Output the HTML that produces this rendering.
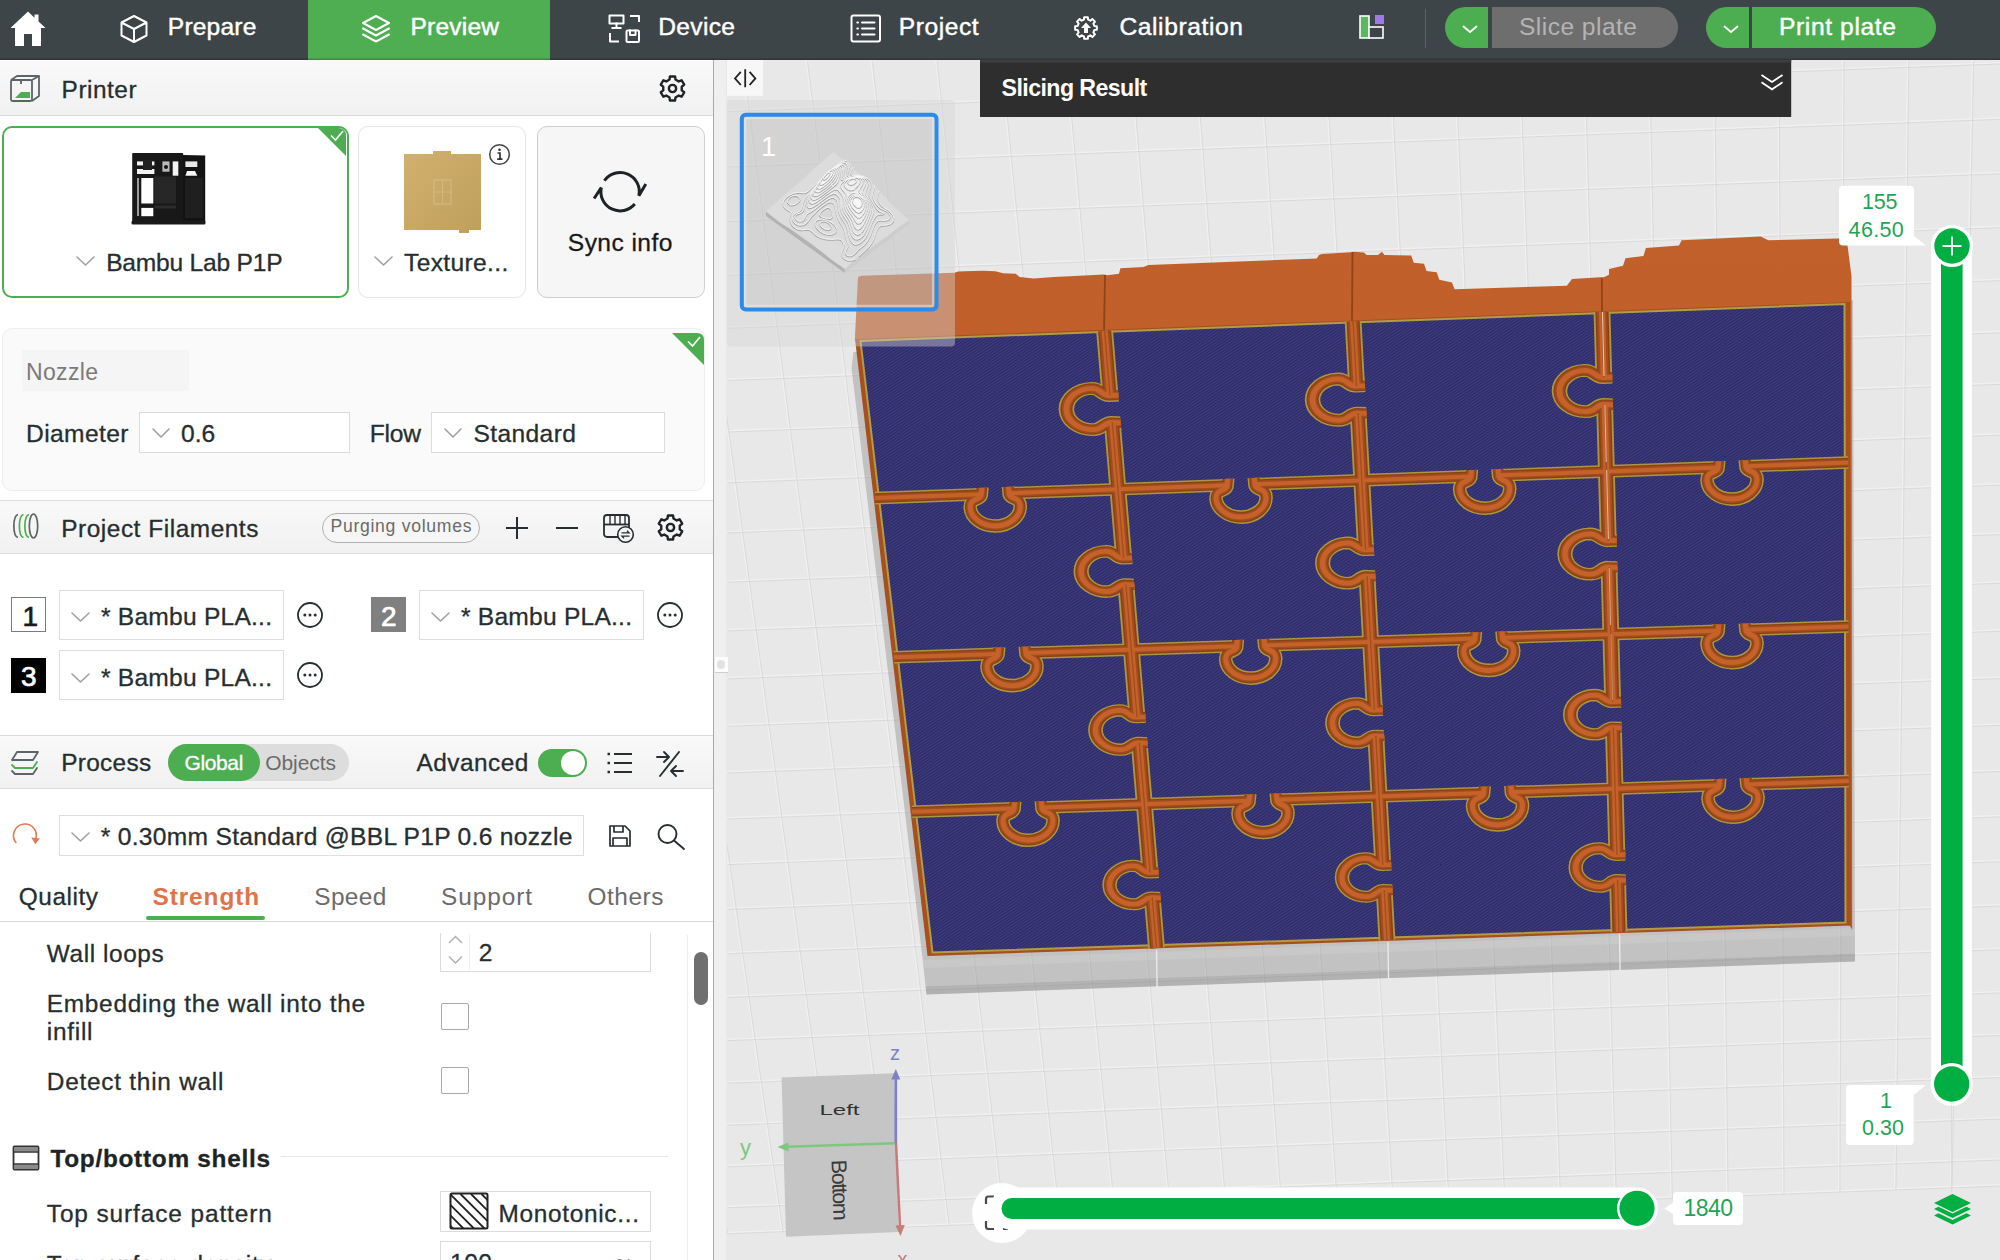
<!DOCTYPE html>
<html lang="en"><head><meta charset="utf-8"><title>Bambu Studio</title>
<style>
html,body{margin:0;padding:0;}
body{width:2000px;height:1260px;overflow:hidden;position:relative;background:#e8e8e8;font-family:"Liberation Sans",sans-serif;}
.t{position:absolute;white-space:pre;line-height:1;}
.ic{position:absolute;overflow:visible;}
svg text{font-family:"Liberation Sans",sans-serif;white-space:pre;}

#left{position:absolute;left:0;top:0;width:713px;height:1260px;background:#fff;overflow:hidden;}

.hdr{position:absolute;left:0;width:713px;background:linear-gradient(#f9f9f9,#f1f1f1);border-bottom:1px solid #dcdcdc;box-sizing:border-box;}
.bx{position:absolute;box-sizing:border-box;}
#vdiv{position:absolute;left:712.8px;top:60px;width:1.1px;height:1200px;background:#a9a9a9;}
#vgap{position:absolute;left:713.9px;top:60px;width:12.1px;height:1200px;background:#efefef;}

#topbar{position:absolute;left:0;top:0;width:2000px;height:60px;background:#3d4548;box-shadow:inset 0 -1.5px 0 rgba(0,0,0,0.22);}
#tab-preview{position:absolute;left:308px;top:0;width:241.5px;height:60px;background:#4fae52;box-shadow:inset 0 -1.5px 0 rgba(0,0,0,0.22);}
#tsep{position:absolute;left:1424.5px;top:9px;width:1.5px;height:39px;background:#5b6366;}
.btnl{position:absolute;top:7px;width:43px;height:41px;background:#4cae50;border-radius:20.5px 0 0 20.5px;}
.btnr{position:absolute;top:7px;height:41px;border-radius:0 20.5px 20.5px 0;}
#grip{position:absolute;left:714.5px;top:656.5px;width:13px;height:16px;background:#fcfcfc;border-bottom:1px solid #cfcfcf;box-sizing:border-box;}#grip i{position:absolute;left:2.2px;top:3.2px;width:8.6px;height:9px;border-radius:50%;background:#e2e2e2;}
</style></head>
<body>
<div id="left">
<div class="hdr" style="top:60px;height:56px;border-top:1.5px solid #fff"></div>
<svg class="ic" style="left:9px;top:74px" width="32" height="30" viewBox="0 0 32 30"><g fill="none" stroke="#5d6467" stroke-width="1.8" stroke-linejoin="round"><rect x="2" y="6" width="21" height="21" rx="1.5"/><path d="M2,6 L8,2 H30 V22 L23,27 M23,6 L30,2"/><path d="M12,6 V10"/></g><path d="M6,24 L12,18 H21 V24 Z" fill="#4cae50"/></svg>
<span class="t" style="left:61.6px;top:78.2px;font-size:24.4px;letter-spacing:0.52px;color:#262e30;font-weight:400;-webkit-text-stroke:0.3px #262e30;">Printer</span>
<svg class="ic" style="left:658.5px;top:75.3px" width="27" height="27" viewBox="0 0 27 27"><path d="M25.20,17.30 L22.64,21.73 L19.76,20.58 L16.50,22.46 L16.06,25.53 L10.94,25.53 L10.50,22.46 L7.24,20.58 L4.36,21.73 L1.80,17.30 L4.24,15.39 L4.24,11.61 L1.80,9.70 L4.36,5.27 L7.24,6.42 L10.50,4.54 L10.94,1.47 L16.06,1.47 L16.50,4.54 L19.76,6.42 L22.64,5.27 L25.20,9.70 L22.76,11.61 L22.76,15.39Z" fill="none" stroke="#1e2426" stroke-width="2.4" stroke-linejoin="round"/><circle cx="13.5" cy="13.5" r="3.65" fill="none" stroke="#1e2426" stroke-width="2.4"/></svg>
<div class="bx" style="left:1.5px;top:126px;width:347.0px;height:171.5px;border:2px solid #4cae50;border-radius:10px;background:#fff;overflow:hidden"></div>
<svg class="ic" style="left:316px;top:126px" width="32" height="32" viewBox="0 0 32 32"><path d="M2,2 H22 Q30,2 30,10 V30 Z" fill="#4cae50"/><path d="M15,9.5 L19.5,14 L27,5" fill="none" stroke="#fff" stroke-width="1.6"/></svg>
<svg class="ic" style="left:130px;top:151px" width="78" height="75" viewBox="0 0 78 75"><rect x="2.2" y="2" width="51" height="71" rx="1" fill="#181818"/><polygon points="53,4 75.2,4.5 75.2,71 53,73" fill="#131313"/><rect x="1.5" y="69.5" width="74" height="4" rx="1.5" fill="#1a1a1a"/><rect x="11.3" y="27" width="12" height="25.5" fill="#fdfdfd"/><rect x="11.3" y="56.9" width="12" height="8.3" fill="#fdfdfd"/><rect x="7" y="27" width="2" height="38" fill="#9a9a9a"/><rect x="7" y="10.4" width="17.4" height="4" fill="#f2f2f2"/><rect x="7" y="18" width="17.4" height="5" fill="#f2f2f2"/><rect x="13" y="9" width="9" height="10" fill="#222"/><rect x="32.4" y="10.4" width="7.1" height="10.3" fill="#b8b8b8"/><circle cx="36" cy="16" r="2" fill="#111"/><rect x="42.7" y="10.4" width="5.6" height="14.3" fill="#f4f4f4"/><rect x="55.4" y="10.4" width="11.9" height="5.6" fill="#e8e8e8"/><polygon points="55.4,24.7 57,20 65,20 67.3,24.7" fill="#f4f4f4"/><rect x="24.5" y="25.5" width="21.5" height="27" fill="#272727"/><rect x="24.5" y="54.5" width="21.5" height="3" fill="#2d2d2d"/><rect x="55" y="27" width="18" height="40" fill="#1f1f1f"/></svg>
<svg class="ic" style="left:76px;top:256px" width="19" height="10" viewBox="-1 -1 19 10"><path d="M0,0 L8.5,8 L17,0" fill="none" stroke="#a0a0a0" stroke-width="1.6" stroke-linecap="round" stroke-linejoin="round"/></svg>
<span class="t" style="left:106.2px;top:250.7px;font-size:24.6px;letter-spacing:-0.23px;color:#262e30;font-weight:400;-webkit-text-stroke:0.3px #262e30;">Bambu Lab P1P</span>
<div class="bx" style="left:358px;top:126px;width:168px;height:171.5px;border:1px solid #e6e6e6;border-radius:10px;background:#fff"></div>
<svg class="ic" style="left:403px;top:150px" width="79" height="84" viewBox="0 0 79 84"><defs><linearGradient id="gold" x1="0" y1="0" x2="1" y2="1"><stop offset="0" stop-color="#d2b16e"/><stop offset="1" stop-color="#bf9f5c"/></linearGradient></defs><path d="M1,4 H30 V1 H48 V4 H78 V80 H66 V83 H56 V80 H1 Z" fill="url(#gold)"/><rect x="31" y="30" width="17" height="24" fill="none" stroke="#d9c08a" stroke-width="0.8"/><path d="M31,42 H48 M39.500,30 V54" stroke="#d9c08a" stroke-width="0.6"/></svg>
<svg class="ic" style="left:487.500px;top:143px" width="23" height="23" viewBox="0 0 23 23"><circle cx="11.500" cy="11.500" r="9.800" fill="#fff" stroke="#444" stroke-width="1.5"/><path d="M9.500,10 H12 V16 M9.200,16.200 H14.500" stroke="#333" stroke-width="1.7" fill="none"/><circle cx="11.500" cy="6.800" r="1.300" fill="#333"/></svg>
<svg class="ic" style="left:374px;top:256px" width="19" height="10" viewBox="-1 -1 19 10"><path d="M0,0 L8.5,8 L17,0" fill="none" stroke="#a0a0a0" stroke-width="1.6" stroke-linecap="round" stroke-linejoin="round"/></svg>
<span class="t" style="left:404.0px;top:250.7px;font-size:24.6px;letter-spacing:0.35px;color:#262e30;font-weight:400;-webkit-text-stroke:0.3px #262e30;">Texture...</span>
<div class="bx" style="left:536.5px;top:126px;width:168.0px;height:171.5px;border:1.5px solid #cfcfcf;border-radius:10px;background:#f6f6f6"></div>
<svg class="ic" style="left:592px;top:166px" width="58" height="52" viewBox="0 0 58 52"><g fill="none" stroke="#1e2426" stroke-width="3" stroke-linejoin="miter"><path d="M12.4,14.7 A19.2,19.2 0 0 1 46.9,29.7 L53.8,17.9"/><path d="M42.8,38 A19.2,19.2 0 0 1 9.3,21.7 L2.1,32.5"/></g></svg>
<span class="t" style="left:567.8px;top:230.9px;font-size:24.6px;letter-spacing:0.43px;color:#1a1a1a;font-weight:400;-webkit-text-stroke:0.3px #1a1a1a;">Sync info</span>
<div class="bx" style="left:2px;top:328px;width:703px;height:162.5px;border:1px solid #eeeeee;border-radius:10px;background:#fafafa"></div>
<svg class="ic" style="left:671px;top:332px" width="34" height="34" viewBox="0 0 34 34"><path d="M1,1 H26 Q33,1 33,8 V33 Z" fill="#4cae50"/><path d="M17,9.500 L21.500,14 L29,5" fill="none" stroke="#fff" stroke-width="1.6"/></svg>
<div class="bx" style="left:21.5px;top:350px;width:167.5px;height:41px;background:#f5f5f5"></div>
<span class="t" style="left:26.0px;top:361.1px;font-size:23px;letter-spacing:0.34px;color:#7a7a7a;font-weight:400;">Nozzle</span>
<span class="t" style="left:26.0px;top:421.7px;font-size:24.6px;letter-spacing:0.39px;color:#262e30;font-weight:400;-webkit-text-stroke:0.3px #262e30;">Diameter</span>
<div class="bx" style="left:138.5px;top:411.5px;width:211.0px;height:41.0px;border:1px solid #dcdcdc;background:#fff"></div>
<svg class="ic" style="left:151.5px;top:427.5px" width="18" height="10" viewBox="-1 -1 18 10"><path d="M0,0 L8.0,8 L16,0" fill="none" stroke="#a0a0a0" stroke-width="1.6" stroke-linecap="round" stroke-linejoin="round"/></svg>
<span class="t" style="left:181.0px;top:421.7px;font-size:24.6px;letter-spacing:0.05px;color:#262e30;font-weight:400;-webkit-text-stroke:0.3px #262e30;">0.6</span>
<span class="t" style="left:369.7px;top:421.7px;font-size:24.6px;letter-spacing:-0.17px;color:#262e30;font-weight:400;-webkit-text-stroke:0.3px #262e30;">Flow</span>
<div class="bx" style="left:431px;top:411.5px;width:234px;height:41.0px;border:1px solid #dcdcdc;background:#fff"></div>
<svg class="ic" style="left:443.5px;top:427.5px" width="18" height="10" viewBox="-1 -1 18 10"><path d="M0,0 L8.0,8 L16,0" fill="none" stroke="#a0a0a0" stroke-width="1.6" stroke-linecap="round" stroke-linejoin="round"/></svg>
<span class="t" style="left:473.4px;top:421.7px;font-size:24.6px;letter-spacing:0.39px;color:#262e30;font-weight:400;-webkit-text-stroke:0.3px #262e30;">Standard</span>
<div class="hdr" style="top:499.5px;height:54.500px;border-top:1px solid #dcdcdc"></div>
<svg class="ic" style="left:11px;top:512px" width="30" height="28" viewBox="0 0 30 28"><g fill="none" stroke-width="1.7"><path d="M7,2.500 C1.500,4 1.500,24 7,25.500" stroke="#5d6467"/><path d="M12.500,2.500 C7,4 7,24 12.500,25.500" stroke="#4cae50"/><path d="M18,2.500 C12.500,4 12.500,24 18,25.500" stroke="#4cae50"/><ellipse cx="22.500" cy="14" rx="4.200" ry="12" stroke="#5d6467"/></g></svg>
<span class="t" style="left:61.2px;top:517.0px;font-size:24.4px;letter-spacing:0.55px;color:#262e30;font-weight:400;-webkit-text-stroke:0.3px #262e30;">Project Filaments</span>
<div class="bx" style="left:322px;top:512.5px;width:158px;height:30.0px;border:1.8px solid #b0b0b0;border-radius:15px;background:#f6f6f6"></div>
<span class="t" style="left:330.5px;top:517.5px;font-size:17.6px;letter-spacing:0.71px;color:#6b6b6b;font-weight:400;">Purging volumes</span>
<svg class="ic" style="left:504px;top:515px" width="26" height="26" viewBox="0 0 26 26"><path d="M13,2 V24 M2,13 H24" stroke="#262e30" stroke-width="2"/></svg>
<svg class="ic" style="left:555px;top:526px" width="24" height="4" viewBox="0 0 24 4"><path d="M1,2 H23" stroke="#262e30" stroke-width="2"/></svg>
<svg class="ic" style="left:602px;top:512px" width="33" height="32" viewBox="0 0 33 32"><g fill="none" stroke="#262e30" stroke-width="1.8" stroke-linejoin="round"><rect x="2" y="3" width="25" height="22" rx="3"/><path d="M2,12.500 H27"/><path d="M8,3.500 V12 M13,3.500 V12 M18,3.500 V12 M23,3.500 V12" stroke-width="1.400"/></g><circle cx="23.500" cy="22.500" r="7.800" fill="#f4f4f4" stroke="#262e30" stroke-width="1.600"/><path d="M19.500,20.800 H27 L25,18.800 M27.500,24.200 H20 L22,26.200" fill="none" stroke="#262e30" stroke-width="1.300"/></svg>
<svg class="ic" style="left:656.5px;top:513.5px" width="27" height="27" viewBox="0 0 27 27"><path d="M25.20,17.30 L22.64,21.73 L19.76,20.58 L16.50,22.46 L16.06,25.53 L10.94,25.53 L10.50,22.46 L7.24,20.58 L4.36,21.73 L1.80,17.30 L4.24,15.39 L4.24,11.61 L1.80,9.70 L4.36,5.27 L7.24,6.42 L10.50,4.54 L10.94,1.47 L16.06,1.47 L16.50,4.54 L19.76,6.42 L22.64,5.27 L25.20,9.70 L22.76,11.61 L22.76,15.39Z" fill="none" stroke="#1e2426" stroke-width="2.4" stroke-linejoin="round"/><circle cx="13.5" cy="13.5" r="3.65" fill="none" stroke="#1e2426" stroke-width="2.4"/></svg>
<div class="bx" style="left:11px;top:597.0px;width:35px;height:35.0px;background:#fff;border:1.5px solid #7a7a7a"></div>
<span class="t" style="left:22.4px;top:602.9px;font-size:28px;letter-spacing:-6.57px;color:#1a1a1a;font-weight:400;-webkit-text-stroke:0.7px #1a1a1a;">1</span>
<div class="bx" style="left:58.5px;top:589.5px;width:225.0px;height:50.0px;border:1px solid #dedede;background:#fff"></div>
<svg class="ic" style="left:71.0px;top:612.0px" width="19" height="10" viewBox="-1 -1 19 10"><path d="M0,0 L8.5,8 L17,0" fill="none" stroke="#a0a0a0" stroke-width="1.6" stroke-linecap="round" stroke-linejoin="round"/></svg>
<span class="t" style="left:101.0px;top:605.1px;font-size:24.6px;letter-spacing:0.22px;color:#262e30;font-weight:400;-webkit-text-stroke:0.3px #262e30;">* Bambu PLA...</span>
<svg class="ic" style="left:295.8px;top:600.5px" width="28" height="28" viewBox="0 0 28 28"><circle cx="14" cy="14" r="12" fill="none" stroke="#262e30" stroke-width="1.800"/><circle cx="8.800" cy="14" r="1.500" fill="#262e30"/><circle cx="14" cy="14" r="1.500" fill="#262e30"/><circle cx="19.200" cy="14" r="1.500" fill="#262e30"/></svg>
<div class="bx" style="left:371px;top:597.0px;width:35px;height:35.0px;background:#808080;border:none"></div>
<span class="t" style="left:381.0px;top:602.9px;font-size:28px;letter-spacing:-1.07px;color:#fff;font-weight:400;-webkit-text-stroke:0.7px #fff;">2</span>
<div class="bx" style="left:418.5px;top:589.5px;width:225.0px;height:50.0px;border:1px solid #dedede;background:#fff"></div>
<svg class="ic" style="left:431.0px;top:612.0px" width="19" height="10" viewBox="-1 -1 19 10"><path d="M0,0 L8.5,8 L17,0" fill="none" stroke="#a0a0a0" stroke-width="1.6" stroke-linecap="round" stroke-linejoin="round"/></svg>
<span class="t" style="left:461.0px;top:605.1px;font-size:24.6px;letter-spacing:0.22px;color:#262e30;font-weight:400;-webkit-text-stroke:0.3px #262e30;">* Bambu PLA...</span>
<svg class="ic" style="left:655.7px;top:600.5px" width="28" height="28" viewBox="0 0 28 28"><circle cx="14" cy="14" r="12" fill="none" stroke="#262e30" stroke-width="1.800"/><circle cx="8.800" cy="14" r="1.500" fill="#262e30"/><circle cx="14" cy="14" r="1.500" fill="#262e30"/><circle cx="19.200" cy="14" r="1.500" fill="#262e30"/></svg>
<div class="bx" style="left:11px;top:657.5px;width:35px;height:35.0px;background:#000;border:none"></div>
<span class="t" style="left:21.0px;top:663.4px;font-size:28px;letter-spacing:-0.87px;color:#fff;font-weight:400;-webkit-text-stroke:0.7px #fff;">3</span>
<div class="bx" style="left:58.5px;top:650px;width:225.0px;height:50px;border:1px solid #dedede;background:#fff"></div>
<svg class="ic" style="left:71.0px;top:672.5px" width="19" height="10" viewBox="-1 -1 19 10"><path d="M0,0 L8.5,8 L17,0" fill="none" stroke="#a0a0a0" stroke-width="1.6" stroke-linecap="round" stroke-linejoin="round"/></svg>
<span class="t" style="left:101.0px;top:665.6px;font-size:24.6px;letter-spacing:0.22px;color:#262e30;font-weight:400;-webkit-text-stroke:0.3px #262e30;">* Bambu PLA...</span>
<svg class="ic" style="left:295.8px;top:661px" width="28" height="28" viewBox="0 0 28 28"><circle cx="14" cy="14" r="12" fill="none" stroke="#262e30" stroke-width="1.800"/><circle cx="8.800" cy="14" r="1.500" fill="#262e30"/><circle cx="14" cy="14" r="1.500" fill="#262e30"/><circle cx="19.200" cy="14" r="1.500" fill="#262e30"/></svg>
<div class="hdr" style="top:734.500px;height:54.500px;border-top:1px solid #dcdcdc"></div>
<svg class="ic" style="left:9px;top:749px" width="32" height="28" viewBox="0 0 32 28"><g fill="none" stroke-width="1.800" stroke-linejoin="round" stroke-linecap="round"><path d="M8,3 H29 L24,11 H3 Z" stroke="#5d6467"/><path d="M3,16 L6,19 H24 L28,13" stroke="#4cae50"/><path d="M3,22 L6,25 H24 L28,19" stroke="#5d6467"/></g></svg>
<span class="t" style="left:61.2px;top:751.0px;font-size:24.4px;letter-spacing:0.31px;color:#262e30;font-weight:400;-webkit-text-stroke:0.3px #262e30;">Process</span>
<div class="bx" style="left:167.5px;top:744px;width:181.0px;height:37px;background:#dddddd;border-radius:18.500px"></div>
<div class="bx" style="left:167.5px;top:744px;width:92.5px;height:37px;background:#4cae50;border-radius:18.500px"></div>
<span class="t" style="left:184.5px;top:752.4px;font-size:21px;letter-spacing:-0.38px;color:#fff;font-weight:400;-webkit-text-stroke:0.300px #fff;">Global</span>
<span class="t" style="left:265.3px;top:752.4px;font-size:21px;letter-spacing:-0.10px;color:#6b6b6b;font-weight:400;">Objects</span>
<span class="t" style="left:416.5px;top:751.0px;font-size:24.4px;letter-spacing:0.48px;color:#262e30;font-weight:400;-webkit-text-stroke:0.3px #262e30;">Advanced</span>
<div class="bx" style="left:538.2px;top:748.5px;width:48.59999999999991px;height:28.5px;background:#4cae50;border-radius:14.500px"></div>
<div class="bx" style="left:561px;top:750.5px;width:24px;height:24.0px;background:#fff;border-radius:12px"></div>
<svg class="ic" style="left:606px;top:751px" width="28" height="24" viewBox="0 0 28 24"><path d="M8,3 H26 M8,12 H26 M8,21 H26" stroke="#262e30" stroke-width="2"/><path d="M1.500,3 H4 M1.500,12 H4 M1.500,21 H4" stroke="#262e30" stroke-width="2.400"/></svg>
<svg class="ic" style="left:655px;top:749px" width="30" height="30" viewBox="0 0 30 30"><g fill="none" stroke="#262e30" stroke-width="1.900" stroke-linecap="round" stroke-linejoin="round"><path d="M24,3 L5,27"/><path d="M2,8 H13 M9,3 L14,8 L9,13"/><path d="M28,22 H17 M21,17 L16,22 L21,27"/></g></svg>
<svg class="ic" style="left:11px;top:822px" width="32" height="28" viewBox="0 0 32 28"><path d="M5.3,20.9 A11.4,11.4 0 1 1 24.7,17.2" fill="none" stroke="#e07b53" stroke-width="1.6"/><path d="M24.3,22.3 L20.3,15.6 L28.9,16.4 Z" fill="#e07b53"/></svg>
<div class="bx" style="left:58.5px;top:814.5px;width:525.0px;height:41.0px;border:1px solid #dedede;background:#fff"></div>
<svg class="ic" style="left:71px;top:832px" width="19" height="10" viewBox="-1 -1 19 10"><path d="M0,0 L8.5,8 L17,0" fill="none" stroke="#a0a0a0" stroke-width="1.6" stroke-linecap="round" stroke-linejoin="round"/></svg>
<span class="t" style="left:100.8px;top:824.7px;font-size:24.6px;letter-spacing:0.29px;color:#262e30;font-weight:400;-webkit-text-stroke:0.3px #262e30;">* 0.30mm Standard @BBL P1P 0.6 nozzle</span>
<svg class="ic" style="left:608px;top:824px" width="24" height="24" viewBox="0 0 24 24"><g fill="none" stroke="#262e30" stroke-width="1.700" stroke-linejoin="round"><path d="M2,2 H17 L22,7 V22 H2 Z"/><path d="M6,2 V8 H15 V2"/><path d="M5,22 V14 H19 V22"/></g></svg>
<svg class="ic" style="left:656px;top:823px" width="30" height="28" viewBox="0 0 30 28"><circle cx="11.500" cy="11" r="9" fill="none" stroke="#262e30" stroke-width="1.900"/><path d="M18,17.500 L28,26" stroke="#262e30" stroke-width="1.900" stroke-linecap="round"/></svg>
<span class="t" style="left:18.8px;top:884.9px;font-size:24.4px;letter-spacing:0.53px;color:#262e30;font-weight:400;-webkit-text-stroke:0.3px #262e30;">Quality</span>
<span class="t" style="left:152.5px;top:884.9px;font-size:24.4px;letter-spacing:0.91px;color:#e0734a;font-weight:700;">Strength</span>
<span class="t" style="left:314.3px;top:884.9px;font-size:24.4px;letter-spacing:0.36px;color:#6b6b6b;font-weight:400;">Speed</span>
<span class="t" style="left:441.0px;top:884.9px;font-size:24.4px;letter-spacing:0.92px;color:#6b6b6b;font-weight:400;">Support</span>
<span class="t" style="left:587.5px;top:884.9px;font-size:24.4px;letter-spacing:0.54px;color:#6b6b6b;font-weight:400;">Others</span>
<div class="bx" style="left:146px;top:916px;width:118.5px;height:4px;background:#4cae50;border-radius:2px"></div>
<div class="bx" style="left:0px;top:921px;width:713px;height:1.2000000000000455px;background:#d9d9d9"></div>
<span class="t" style="left:46.8px;top:942.1px;font-size:24.4px;letter-spacing:0.59px;color:#262e30;font-weight:400;-webkit-text-stroke:0.3px #262e30;">Wall loops</span>
<div class="bx" style="left:440px;top:933px;width:211px;height:38.5px;border:1px solid #dcdcdc;border-top:none;background:#fff"></div>
<div class="bx" style="left:469px;top:934px;width:1px;height:36px;background:#f0f0f0"></div>
<svg class="ic" style="left:447px;top:934px" width="18" height="36" viewBox="0 0 18 36"><path d="M2,9 L8.500,2.500 L15,9 M2,22.500 L8.500,29 L15,22.500" fill="none" stroke="#b0b0b0" stroke-width="1.500"/></svg>
<span class="t" style="left:478.8px;top:940.6px;font-size:24.6px;letter-spacing:0.00px;color:#262e30;font-weight:400;-webkit-text-stroke:0.3px #262e30;">2</span>
<div class="bx" style="left:687px;top:935px;width:1px;height:325px;background:#ececec"></div>
<div class="bx" style="left:694px;top:952px;width:13.5px;height:53px;background:#6f6f6f;border-radius:7px"></div>
<span class="t" style="left:46.8px;top:991.8px;font-size:24.4px;letter-spacing:0.72px;color:#262e30;font-weight:400;-webkit-text-stroke:0.3px #262e30;">Embedding the wall into the</span>
<span class="t" style="left:46.8px;top:1019.9px;font-size:24.4px;letter-spacing:0.73px;color:#262e30;font-weight:400;-webkit-text-stroke:0.3px #262e30;">infill</span>
<div class="bx" style="left:440.5px;top:1002.5px;width:28.0px;height:27.0px;border:1.600px solid #a8a8a8;border-radius:2px;background:#fff"></div>
<span class="t" style="left:46.8px;top:1070.2px;font-size:24.4px;letter-spacing:0.75px;color:#262e30;font-weight:400;-webkit-text-stroke:0.3px #262e30;">Detect thin wall</span>
<div class="bx" style="left:440.5px;top:1066.5px;width:28.0px;height:27.0px;border:1.600px solid #a8a8a8;border-radius:2px;background:#fff"></div>
<svg class="ic" style="left:11.500px;top:1145px" width="28" height="26" viewBox="0 0 28 26"><rect x="1.500" y="1.500" width="25" height="23" rx="1" fill="#fff" stroke="#333" stroke-width="1.800"/><rect x="2" y="2" width="24" height="4.500" fill="#8a8a8a"/><rect x="2" y="19.500" width="24" height="4.500" fill="#8a8a8a"/><path d="M1.500,7 H26.500 M1.500,19 H26.500" stroke="#333" stroke-width="1.300"/></svg>
<span class="t" style="left:50.4px;top:1147.2px;font-size:24.4px;letter-spacing:0.71px;color:#1d2426;font-weight:700;-webkit-text-stroke:0.3px #1d2426;">Top/bottom shells</span>
<div class="bx" style="left:281px;top:1156.3px;width:387px;height:1.2000000000000455px;background:#e6e6e6"></div>
<span class="t" style="left:46.8px;top:1202.4px;font-size:24.4px;letter-spacing:0.90px;color:#262e30;font-weight:400;-webkit-text-stroke:0.3px #262e30;">Top surface pattern</span>
<div class="bx" style="left:440px;top:1190.5px;width:211px;height:41.0px;border:1px solid #dcdcdc;background:#fff"></div>
<svg class="ic" style="left:449px;top:1191.500px" width="40" height="38" viewBox="0 0 40 38"><defs><clipPath id="hc"><rect x="2" y="2" width="36" height="34"/></clipPath></defs><rect x="1.500" y="1.500" width="37" height="35" rx="1.500" fill="#fff" stroke="#222" stroke-width="2"/><g clip-path="url(#hc)" stroke="#222" stroke-width="1.900"><path d="M-9.500,2 L30.500,42 M1,2 L41,42 M11.500,2 L51.500,42 M22,2 L62,42 M32.500,2 L72.500,42 M-20,2 L20,42 M-30.500,2 L9.500,42"/></g></svg>
<span class="t" style="left:498.6px;top:1202.4px;font-size:24.4px;letter-spacing:0.68px;color:#262e30;font-weight:400;-webkit-text-stroke:0.3px #262e30;">Monotonic...</span>
<span class="t" style="left:46.8px;top:1252.7px;font-size:24.4px;letter-spacing:0.82px;color:#262e30;font-weight:400;-webkit-text-stroke:0.3px #262e30;">Top surface density</span>
<div class="bx" style="left:440px;top:1240.5px;width:211px;height:41.0px;border:1px solid #dcdcdc;background:#fff"></div>
<span class="t" style="left:450.0px;top:1250.6px;font-size:24.6px;letter-spacing:0.48px;color:#262e30;font-weight:400;-webkit-text-stroke:0.3px #262e30;">100</span>
<span class="t" style="left:615.6px;top:1256.0px;font-size:20px;letter-spacing:0.00px;color:#8a8a8a;font-weight:400;">%</span>
</div>
<div id="vdiv"></div><div id="vgap"></div>
<svg id="scene" width="1273" height="1200" viewBox="727 60 1273 1200" style="position:absolute;left:727px;top:60px">
<defs>
<pattern id="hatch" width="2.5" height="2.5" patternUnits="userSpaceOnUse" patternTransform="rotate(-33)">
<rect width="2.5" height="2.5" fill="#403d7d"/><rect y="0" width="2.5" height="1.2" fill="#2c2969"/></pattern>
<linearGradient id="og" x1="0" y1="0" x2="0" y2="1"><stop offset="0" stop-color="#c2602c"/><stop offset="1" stop-color="#bd5c2a"/></linearGradient>
<linearGradient id="gg" x1="0" y1="0" x2="0" y2="1"><stop offset="0" stop-color="#c9c9c9"/><stop offset="0.7" stop-color="#c0c0c0"/><stop offset="1" stop-color="#b4b4b4"/></linearGradient>
<clipPath id="cv"><rect x="727" y="60" width="1273" height="1200"/></clipPath>
</defs>
<rect x="727" y="60" width="1273" height="1200" fill="#e8e8e8"/>
<g clip-path="url(#cv)">
<g stroke="#f0f0f0" stroke-width="1.6"><line x1="-100.6" y1="60.0" x2="175.2" y2="1253.2"/><line x1="-35.8" y1="60.0" x2="230.1" y2="1251.1"/><line x1="29.0" y1="60.0" x2="285.2" y2="1249.1"/><line x1="93.7" y1="60.0" x2="340.2" y2="1247.0"/><line x1="158.5" y1="60.0" x2="395.3" y2="1244.9"/><line x1="223.3" y1="60.0" x2="450.4" y2="1242.9"/><line x1="288.1" y1="60.0" x2="505.5" y2="1240.8"/><line x1="352.9" y1="60.0" x2="560.7" y2="1238.7"/><line x1="417.6" y1="60.0" x2="615.9" y2="1236.7"/><line x1="482.4" y1="60.0" x2="671.2" y2="1234.6"/><line x1="547.2" y1="60.0" x2="726.4" y2="1232.5"/><line x1="612.0" y1="60.0" x2="781.8" y2="1230.4"/><line x1="676.8" y1="60.0" x2="837.1" y2="1228.4"/><line x1="741.5" y1="60.0" x2="892.5" y2="1226.3"/><line x1="806.3" y1="60.0" x2="947.9" y2="1224.2"/><line x1="871.1" y1="60.0" x2="1003.3" y2="1222.1"/><line x1="935.9" y1="60.0" x2="1058.8" y2="1220.1"/><line x1="1000.7" y1="60.0" x2="1114.3" y2="1218.0"/><line x1="1065.4" y1="60.0" x2="1169.8" y2="1215.9"/><line x1="1130.2" y1="60.0" x2="1225.4" y2="1213.8"/><line x1="1195.0" y1="60.0" x2="1281.0" y2="1211.7"/><line x1="1259.8" y1="60.0" x2="1336.6" y2="1209.6"/><line x1="1324.6" y1="60.0" x2="1392.3" y2="1207.6"/><line x1="1389.3" y1="60.0" x2="1448.0" y2="1205.5"/><line x1="1454.1" y1="60.0" x2="1503.7" y2="1203.4"/><line x1="1518.9" y1="60.0" x2="1559.4" y2="1201.3"/><line x1="1583.7" y1="60.0" x2="1615.2" y2="1199.2"/><line x1="1648.5" y1="60.0" x2="1671.1" y2="1197.1"/><line x1="1713.3" y1="60.0" x2="1726.9" y2="1195.0"/><line x1="1778.0" y1="60.0" x2="1782.8" y2="1192.9"/><line x1="1842.8" y1="60.0" x2="1838.7" y2="1190.8"/><line x1="1907.6" y1="60.0" x2="1894.7" y2="1188.7"/><line x1="1972.4" y1="60.0" x2="1950.7" y2="1186.6"/><line x1="2037.2" y1="60.0" x2="2006.7" y2="1184.5"/><line x1="727.0" y1="54.3" x2="2000.0" y2="6.5"/><line x1="727.0" y1="110.4" x2="2000.0" y2="62.7"/><line x1="727.0" y1="165.8" x2="2000.0" y2="118.1"/><line x1="727.0" y1="220.4" x2="2000.0" y2="172.6"/><line x1="727.0" y1="274.1" x2="2000.0" y2="226.4"/><line x1="727.0" y1="327.1" x2="2000.0" y2="279.4"/><line x1="727.0" y1="379.3" x2="2000.0" y2="331.6"/><line x1="727.0" y1="430.8" x2="2000.0" y2="383.1"/><line x1="727.0" y1="481.6" x2="2000.0" y2="433.9"/><line x1="727.0" y1="531.7" x2="2000.0" y2="483.9"/><line x1="727.0" y1="581.0" x2="2000.0" y2="533.3"/><line x1="727.0" y1="629.7" x2="2000.0" y2="582.0"/><line x1="727.0" y1="677.7" x2="2000.0" y2="630.0"/><line x1="727.0" y1="725.1" x2="2000.0" y2="677.3"/><line x1="727.0" y1="771.8" x2="2000.0" y2="724.1"/><line x1="727.0" y1="817.9" x2="2000.0" y2="770.2"/><line x1="727.0" y1="863.4" x2="2000.0" y2="815.6"/><line x1="727.0" y1="908.3" x2="2000.0" y2="860.5"/><line x1="727.0" y1="952.5" x2="2000.0" y2="904.8"/><line x1="727.0" y1="996.3" x2="2000.0" y2="948.5"/><line x1="727.0" y1="1039.4" x2="2000.0" y2="991.7"/><line x1="727.0" y1="1082.0" x2="2000.0" y2="1034.2"/><line x1="727.0" y1="1124.0" x2="2000.0" y2="1076.3"/><line x1="727.0" y1="1165.5" x2="2000.0" y2="1117.8"/><line x1="727.0" y1="1206.5" x2="2000.0" y2="1158.8"/><line x1="727.0" y1="1232.5" x2="2000.0" y2="1184.8"/></g>
<g stroke="#d6d6d6" stroke-width="0.8"><line x1="-99.4" y1="61.2" x2="176.4" y2="1254.4"/><line x1="-34.6" y1="61.2" x2="231.3" y2="1252.3"/><line x1="30.2" y1="61.2" x2="286.4" y2="1250.3"/><line x1="94.9" y1="61.2" x2="341.4" y2="1248.2"/><line x1="159.7" y1="61.2" x2="396.5" y2="1246.1"/><line x1="224.5" y1="61.2" x2="451.6" y2="1244.1"/><line x1="289.3" y1="61.2" x2="506.7" y2="1242.0"/><line x1="354.1" y1="61.2" x2="561.9" y2="1239.9"/><line x1="418.8" y1="61.2" x2="617.1" y2="1237.9"/><line x1="483.6" y1="61.2" x2="672.4" y2="1235.8"/><line x1="548.4" y1="61.2" x2="727.6" y2="1233.7"/><line x1="613.2" y1="61.2" x2="783.0" y2="1231.6"/><line x1="678.0" y1="61.2" x2="838.3" y2="1229.6"/><line x1="742.7" y1="61.2" x2="893.7" y2="1227.5"/><line x1="807.5" y1="61.2" x2="949.1" y2="1225.4"/><line x1="872.3" y1="61.2" x2="1004.5" y2="1223.3"/><line x1="937.1" y1="61.2" x2="1060.0" y2="1221.3"/><line x1="1001.9" y1="61.2" x2="1115.5" y2="1219.2"/><line x1="1066.6" y1="61.2" x2="1171.0" y2="1217.1"/><line x1="1131.4" y1="61.2" x2="1226.6" y2="1215.0"/><line x1="1196.2" y1="61.2" x2="1282.2" y2="1212.9"/><line x1="1261.0" y1="61.2" x2="1337.8" y2="1210.8"/><line x1="1325.8" y1="61.2" x2="1393.5" y2="1208.8"/><line x1="1390.5" y1="61.2" x2="1449.2" y2="1206.7"/><line x1="1455.3" y1="61.2" x2="1504.9" y2="1204.6"/><line x1="1520.1" y1="61.2" x2="1560.6" y2="1202.5"/><line x1="1584.9" y1="61.2" x2="1616.4" y2="1200.4"/><line x1="1649.7" y1="61.2" x2="1672.3" y2="1198.3"/><line x1="1714.5" y1="61.2" x2="1728.1" y2="1196.2"/><line x1="1779.2" y1="61.2" x2="1784.0" y2="1194.1"/><line x1="1844.0" y1="61.2" x2="1839.9" y2="1192.0"/><line x1="1908.8" y1="61.2" x2="1895.9" y2="1189.9"/><line x1="1973.6" y1="61.2" x2="1951.9" y2="1187.8"/><line x1="2038.4" y1="61.2" x2="2007.9" y2="1185.7"/><line x1="728.2" y1="55.5" x2="2001.2" y2="7.7"/><line x1="728.2" y1="111.6" x2="2001.2" y2="63.9"/><line x1="728.2" y1="167.0" x2="2001.2" y2="119.3"/><line x1="728.2" y1="221.6" x2="2001.2" y2="173.8"/><line x1="728.2" y1="275.3" x2="2001.2" y2="227.6"/><line x1="728.2" y1="328.3" x2="2001.2" y2="280.6"/><line x1="728.2" y1="380.5" x2="2001.2" y2="332.8"/><line x1="728.2" y1="432.0" x2="2001.2" y2="384.3"/><line x1="728.2" y1="482.8" x2="2001.2" y2="435.1"/><line x1="728.2" y1="532.9" x2="2001.2" y2="485.1"/><line x1="728.2" y1="582.2" x2="2001.2" y2="534.5"/><line x1="728.2" y1="630.9" x2="2001.2" y2="583.2"/><line x1="728.2" y1="678.9" x2="2001.2" y2="631.2"/><line x1="728.2" y1="726.3" x2="2001.2" y2="678.5"/><line x1="728.2" y1="773.0" x2="2001.2" y2="725.3"/><line x1="728.2" y1="819.1" x2="2001.2" y2="771.4"/><line x1="728.2" y1="864.6" x2="2001.2" y2="816.8"/><line x1="728.2" y1="909.5" x2="2001.2" y2="861.7"/><line x1="728.2" y1="953.7" x2="2001.2" y2="906.0"/><line x1="728.2" y1="997.5" x2="2001.2" y2="949.7"/><line x1="728.2" y1="1040.6" x2="2001.2" y2="992.9"/><line x1="728.2" y1="1083.2" x2="2001.2" y2="1035.4"/><line x1="728.2" y1="1125.2" x2="2001.2" y2="1077.5"/><line x1="728.2" y1="1166.7" x2="2001.2" y2="1119.0"/><line x1="728.2" y1="1207.7" x2="2001.2" y2="1160.0"/><line x1="728.2" y1="1233.7" x2="2001.2" y2="1186.0"/></g>
</g>
<polygon points="851.5,368.0 853.5,352.0 1853.0,300.0 1855.0,961.5 926.5,994.5 922.5,958.0" fill="rgba(140,140,140,0.42)"/>
<polygon points="925.3,986.5 1855.0,953.5 1855.0,961.5 926.5,994.5" fill="rgba(120,120,120,0.22)"/>
<polygon points="922.8,960.0 1855.0,928.0 1855.0,936.0 923.6,968.0" fill="rgba(255,255,255,0.10)"/>
<line x1="1156.5" y1="950" x2="1157.1" y2="987.5" stroke="#ececec" stroke-width="1.3"/>
<line x1="1388" y1="942" x2="1388.6" y2="979.5" stroke="#ececec" stroke-width="1.3"/>
<line x1="1619.5" y1="934" x2="1620.1" y2="971.5" stroke="#ececec" stroke-width="1.3"/>
<polygon points="854.8,340.0 858.0,277.0 861.5,275.8 954.6,272.8 958.0,271.6 964.8,271.2 982.7,270.7 995.4,271.2 1003.0,273.3 1015.8,273.8 1019.6,277.1 1033.7,278.4 1054.0,277.1 1079.6,275.8 1103.8,274.5 1107.7,275.3 1119.0,273.8 1120.4,268.2 1143.4,266.9 1148.5,265.1 1232.7,261.8 1316.8,258.5 1319.0,255.0 1321.9,254.1 1351.0,252.3 1353.8,251.8 1364.0,252.6 1366.6,255.1 1378.0,255.1 1381.9,251.8 1384.4,255.1 1411.2,255.6 1413.8,262.8 1424.0,263.8 1426.5,270.9 1436.7,272.2 1439.3,279.8 1452.0,282.4 1454.6,289.3 1566.8,285.7 1572.0,279.1 1600.0,277.3 1603.8,277.3 1609.0,274.7 1609.0,268.9 1623.0,265.8 1625.5,258.2 1643.4,256.1 1645.9,248.0 1679.0,245.4 1681.6,240.3 1760.7,236.5 1768.4,240.3 1846.2,238.3 1847.6,246.0 1851.5,276.0 1852.2,930.0 1850.0,926.0" fill="url(#og)"/>
<line x1="1105" y1="275" x2="1104" y2="331" stroke="#8f431b" stroke-width="1.8"/>
<line x1="1352.5" y1="252" x2="1352" y2="321" stroke="#8f431b" stroke-width="1.8"/>
<line x1="1601.8" y1="278" x2="1602" y2="311" stroke="#8f431b" stroke-width="1.8"/>
<polygon points="855.0,339.0 1850.0,302.0 1851.0,925.5 927.5,956.0" fill="#a64f1f"/>
<polygon points="860.5,341.0 1844.5,304.0 1845.5,922.5 932.5,952.5" fill="url(#hatch)" stroke="#b39c44" stroke-width="2"/>
<defs><clipPath id="rc0"><polygon points="950.2,489.1 1040.2,485.8 1040.2,553.7 950.2,553.7"/></clipPath><clipPath id="rc1"><polygon points="1196.0,480.1 1286.0,476.8 1286.0,544.8 1196.0,544.8"/></clipPath><clipPath id="rc2"><polygon points="1439.7,471.2 1529.7,467.9 1529.7,535.9 1439.7,535.9"/></clipPath><clipPath id="rc3"><polygon points="1687.0,462.2 1777.0,458.9 1777.0,526.8 1687.0,526.8"/></clipPath><clipPath id="rc4"><polygon points="967.0,648.6 1057.0,645.7 1057.0,713.4 967.0,713.4"/></clipPath><clipPath id="rc5"><polygon points="1205.7,640.9 1295.7,638.0 1295.7,705.8 1205.7,705.8"/></clipPath><clipPath id="rc6"><polygon points="1443.7,633.3 1533.7,630.4 1533.7,698.1 1443.7,698.1"/></clipPath><clipPath id="rc7"><polygon points="1687.0,625.5 1777.0,622.6 1777.0,690.3 1687.0,690.3"/></clipPath><clipPath id="rc8"><polygon points="983.0,803.1 1073.0,800.2 1073.0,867.9 983.0,867.9"/></clipPath><clipPath id="rc9"><polygon points="1218.0,795.4 1308.0,792.5 1308.0,860.2 1218.0,860.2"/></clipPath><clipPath id="rc10"><polygon points="1452.5,787.7 1542.5,784.8 1542.5,852.6 1452.5,852.6"/></clipPath><clipPath id="rc11"><polygon points="1688.0,780.0 1778.0,777.1 1778.0,844.9 1688.0,844.9"/></clipPath><clipPath id="rc12"><polygon points="1116.2,369.0 1122.9,449.0 1031.1,449.0 1031.1,369.0"/></clipPath><clipPath id="rc13"><polygon points="1129.8,531.4 1136.5,611.4 1044.8,611.4 1044.8,531.4"/></clipPath><clipPath id="rc14"><polygon points="1143.1,690.0 1149.9,770.0 1058.1,770.0 1058.1,690.0"/></clipPath><clipPath id="rc15"><polygon points="1156.2,845.0 1162.9,925.0 1071.1,925.0 1071.1,845.0"/></clipPath><clipPath id="rc16"><polygon points="1363.6,359.6 1367.9,439.6 1277.3,439.6 1277.3,359.6"/></clipPath><clipPath id="rc17"><polygon points="1372.5,523.0 1376.9,603.0 1286.3,603.0 1286.3,523.0"/></clipPath><clipPath id="rc18"><polygon points="1381.3,683.0 1385.6,763.0 1295.1,763.0 1295.1,683.0"/></clipPath><clipPath id="rc19"><polygon points="1389.7,837.5 1394.1,917.5 1303.5,917.5 1303.5,837.5"/></clipPath><clipPath id="rc20"><polygon points="1611.5,351.0 1613.7,431.0 1524.2,431.0 1524.2,351.0"/></clipPath><clipPath id="rc21"><polygon points="1616.0,514.0 1618.1,594.0 1528.6,594.0 1528.6,514.0"/></clipPath><clipPath id="rc22"><polygon points="1620.3,674.7 1622.5,754.7 1533.0,754.7 1533.0,674.7"/></clipPath><clipPath id="rc23"><polygon points="1624.5,827.5 1626.7,907.5 1537.2,907.5 1537.2,827.5"/></clipPath></defs>
<path d="M875.0,498.1 L980.7,494.3 M1009.7,493.2 L1226.5,485.3 M1255.5,484.2 L1470.2,476.4 M1499.2,475.3 L1717.5,467.4 M1746.5,466.3 L1848.3,462.5" fill="none" stroke="#ad963c" stroke-width="12.6"/>
<path d="M894.0,657.2 L997.5,653.9 M1026.5,653.0 L1236.2,646.2 M1265.2,645.3 L1474.2,638.6 M1503.2,637.7 L1717.5,630.8 M1746.5,629.8 L1848.6,626.5" fill="none" stroke="#ad963c" stroke-width="12.6"/>
<path d="M912.0,811.7 L1013.5,808.4 M1042.5,807.5 L1248.5,800.7 M1277.5,799.8 L1483.0,793.0 M1512.0,792.1 L1718.5,785.3 M1747.5,784.4 L1848.8,781.0" fill="none" stroke="#ad963c" stroke-width="12.6"/>
<path d="M1104.6,331.0 L1110.0,395.5 M1112.3,422.5 L1123.7,558.2 M1125.9,584.6 L1137.0,717.1 M1139.2,742.9 L1150.1,872.5 M1152.2,897.5 L1156.5,948.0" fill="none" stroke="#ad963c" stroke-width="16.8"/>
<path d="M1353.1,321.3 L1356.6,386.1 M1358.1,413.1 L1365.6,549.8 M1367.0,576.2 L1374.4,710.1 M1375.8,735.9 L1382.8,865.0 M1384.2,890.0 L1387.0,940.0" fill="none" stroke="#ad963c" stroke-width="16.8"/>
<path d="M1602.0,311.8 L1603.8,377.5 M1604.6,404.5 L1608.3,540.8 M1609.0,567.2 L1612.7,701.8 M1613.4,727.6 L1616.9,855.0 M1617.6,880.0 L1619.0,932.0" fill="none" stroke="#ad963c" stroke-width="16.8"/>
<g clip-path="url(#rc0)"><path d="M982.2,484.3 L981.2,495.3 C979.7,500.3 970.2,497.9 970.2,506.9 A25.0,19.5 0 0 0 1020.2,506.1 C1020.2,497.1 1010.7,499.2 1009.2,494.2 L1008.2,483.2" fill="none" stroke="#ad963c" stroke-width="13.6" stroke-linejoin="round"/></g>
<g clip-path="url(#rc1)"><path d="M1228.0,475.3 L1227.0,486.3 C1225.5,491.3 1216.0,489.0 1216.0,498.0 A25.0,19.5 0 0 0 1266.0,497.2 C1266.0,488.2 1256.5,490.2 1255.0,485.2 L1254.0,474.2" fill="none" stroke="#ad963c" stroke-width="13.6" stroke-linejoin="round"/></g>
<g clip-path="url(#rc2)"><path d="M1471.7,466.4 L1470.7,477.4 C1469.2,482.4 1459.7,480.1 1459.7,489.1 A25.0,19.5 0 0 0 1509.7,488.3 C1509.7,479.3 1500.2,481.3 1498.7,476.3 L1497.7,465.3" fill="none" stroke="#ad963c" stroke-width="13.6" stroke-linejoin="round"/></g>
<g clip-path="url(#rc3)"><path d="M1719.0,457.4 L1718.0,468.4 C1716.5,473.4 1707.0,471.0 1707.0,480.0 A25.0,19.5 0 0 0 1757.0,479.2 C1757.0,470.2 1747.5,472.3 1746.0,467.3 L1745.0,456.3" fill="none" stroke="#ad963c" stroke-width="13.6" stroke-linejoin="round"/></g>
<g clip-path="url(#rc4)"><path d="M999.0,643.9 L998.0,654.9 C996.5,659.9 987.0,657.6 987.0,666.6 A25.0,19.5 0 0 0 1037.0,665.8 C1037.0,656.8 1027.5,659.0 1026.0,654.0 L1025.0,643.0" fill="none" stroke="#ad963c" stroke-width="13.6" stroke-linejoin="round"/></g>
<g clip-path="url(#rc5)"><path d="M1237.7,636.2 L1236.7,647.2 C1235.2,652.2 1225.7,650.0 1225.7,659.0 A25.0,19.5 0 0 0 1275.7,658.2 C1275.7,649.2 1266.2,651.3 1264.7,646.3 L1263.7,635.3" fill="none" stroke="#ad963c" stroke-width="13.6" stroke-linejoin="round"/></g>
<g clip-path="url(#rc6)"><path d="M1475.7,628.6 L1474.7,639.6 C1473.2,644.6 1463.7,642.3 1463.7,651.3 A25.0,19.5 0 0 0 1513.7,650.5 C1513.7,641.5 1504.2,643.7 1502.7,638.7 L1501.7,627.7" fill="none" stroke="#ad963c" stroke-width="13.6" stroke-linejoin="round"/></g>
<g clip-path="url(#rc7)"><path d="M1719.0,620.8 L1718.0,631.8 C1716.5,636.8 1707.0,634.5 1707.0,643.5 A25.0,19.5 0 0 0 1757.0,642.7 C1757.0,633.7 1747.5,635.8 1746.0,630.8 L1745.0,619.8" fill="none" stroke="#ad963c" stroke-width="13.6" stroke-linejoin="round"/></g>
<g clip-path="url(#rc8)"><path d="M1015.0,798.4 L1014.0,809.4 C1012.5,814.4 1003.0,812.1 1003.0,821.1 A25.0,19.5 0 0 0 1053.0,820.3 C1053.0,811.3 1043.5,813.5 1042.0,808.5 L1041.0,797.5" fill="none" stroke="#ad963c" stroke-width="13.6" stroke-linejoin="round"/></g>
<g clip-path="url(#rc9)"><path d="M1250.0,790.7 L1249.0,801.7 C1247.5,806.7 1238.0,804.4 1238.0,813.4 A25.0,19.5 0 0 0 1288.0,812.6 C1288.0,803.6 1278.5,805.8 1277.0,800.8 L1276.0,789.8" fill="none" stroke="#ad963c" stroke-width="13.6" stroke-linejoin="round"/></g>
<g clip-path="url(#rc10)"><path d="M1484.5,783.0 L1483.5,794.0 C1482.0,799.0 1472.5,796.8 1472.5,805.8 A25.0,19.5 0 0 0 1522.5,805.0 C1522.5,796.0 1513.0,798.1 1511.5,793.1 L1510.5,782.1" fill="none" stroke="#ad963c" stroke-width="13.6" stroke-linejoin="round"/></g>
<g clip-path="url(#rc11)"><path d="M1720.0,775.3 L1719.0,786.3 C1717.5,791.3 1708.0,789.1 1708.0,798.1 A25.0,19.5 0 0 0 1758.0,797.3 C1758.0,788.3 1748.5,790.4 1747.0,785.4 L1746.0,774.4" fill="none" stroke="#ad963c" stroke-width="13.6" stroke-linejoin="round"/></g>
<g clip-path="url(#rc12)"><path d="M9.06,-13.98 L-1.78,-13.48 C-7.61,-13.48 -8.55,-20.65 -16.05,-20.65 A21.85,20.65 0 0 0 -14.80,20.65 C-7.30,20.65 -5.72,13.48 0.11,13.48 L10.94,13.98" transform="translate(1111.1,409.0) scale(1.2,1)" fill="none" stroke="#ad963c" stroke-width="12.9" stroke-linejoin="round"/></g>
<g clip-path="url(#rc13)"><path d="M9.08,-13.67 L-1.76,-13.17 C-7.59,-13.17 -8.18,-20.17 -15.68,-20.17 A21.34,20.17 0 0 0 -14.43,20.17 C-6.93,20.17 -5.74,13.17 0.09,13.17 L10.92,13.67" transform="translate(1124.8,571.4) scale(1.2,1)" fill="none" stroke="#ad963c" stroke-width="12.6" stroke-linejoin="round"/></g>
<g clip-path="url(#rc14)"><path d="M9.10,-13.35 L-1.73,-12.85 C-7.57,-12.85 -7.80,-19.69 -15.30,-19.69 A20.83,19.69 0 0 0 -14.05,19.69 C-6.55,19.69 -5.77,12.85 0.07,12.85 L10.90,13.35" transform="translate(1138.1,730.0) scale(1.2,1)" fill="none" stroke="#ad963c" stroke-width="12.3" stroke-linejoin="round"/></g>
<g clip-path="url(#rc15)"><path d="M9.12,-13.04 L-1.71,-12.54 C-7.54,-12.54 -7.43,-19.20 -14.93,-19.20 A20.31,19.20 0 0 0 -13.68,19.20 C-6.18,19.20 -5.79,12.54 0.04,12.54 L10.88,13.04" transform="translate(1151.1,885.0) scale(1.2,1)" fill="none" stroke="#ad963c" stroke-width="12.0" stroke-linejoin="round"/></g>
<g clip-path="url(#rc16)"><path d="M9.38,-13.98 L-1.45,-13.48 C-7.28,-13.48 -8.55,-20.65 -16.05,-20.65 A21.85,20.65 0 0 0 -14.80,20.65 C-7.30,20.65 -6.05,13.48 -0.22,13.48 L10.62,13.98" transform="translate(1357.3,399.6) scale(1.2,1)" fill="none" stroke="#ad963c" stroke-width="12.9" stroke-linejoin="round"/></g>
<g clip-path="url(#rc17)"><path d="M9.40,-13.67 L-1.43,-13.17 C-7.27,-13.17 -8.18,-20.17 -15.68,-20.17 A21.34,20.17 0 0 0 -14.43,20.17 C-6.93,20.17 -6.07,13.17 -0.23,13.17 L10.60,13.67" transform="translate(1366.3,563.0) scale(1.2,1)" fill="none" stroke="#ad963c" stroke-width="12.6" stroke-linejoin="round"/></g>
<g clip-path="url(#rc18)"><path d="M9.41,-13.35 L-1.42,-12.85 C-7.25,-12.85 -7.80,-19.69 -15.30,-19.69 A20.83,19.69 0 0 0 -14.05,19.69 C-6.55,19.69 -6.08,12.85 -0.25,12.85 L10.59,13.35" transform="translate(1375.1,723.0) scale(1.2,1)" fill="none" stroke="#ad963c" stroke-width="12.3" stroke-linejoin="round"/></g>
<g clip-path="url(#rc19)"><path d="M9.43,-13.04 L-1.41,-12.54 C-7.24,-12.54 -7.43,-19.20 -14.93,-19.20 A20.31,19.20 0 0 0 -13.68,19.20 C-6.18,19.20 -6.09,12.54 -0.26,12.54 L10.57,13.04" transform="translate(1383.5,877.5) scale(1.2,1)" fill="none" stroke="#ad963c" stroke-width="12.0" stroke-linejoin="round"/></g>
<g clip-path="url(#rc20)"><path d="M9.69,-13.98 L-1.14,-13.48 C-6.97,-13.48 -8.55,-20.65 -16.05,-20.65 A21.85,20.65 0 0 0 -14.80,20.65 C-7.30,20.65 -6.36,13.48 -0.53,13.48 L10.31,13.98" transform="translate(1604.2,391.0) scale(1.2,1)" fill="none" stroke="#ad963c" stroke-width="12.9" stroke-linejoin="round"/></g>
<g clip-path="url(#rc21)"><path d="M9.70,-13.67 L-1.13,-13.17 C-6.97,-13.17 -8.18,-20.17 -15.68,-20.17 A21.34,20.17 0 0 0 -14.43,20.17 C-6.93,20.17 -6.37,13.17 -0.53,13.17 L10.30,13.67" transform="translate(1608.6,554.0) scale(1.2,1)" fill="none" stroke="#ad963c" stroke-width="12.6" stroke-linejoin="round"/></g>
<g clip-path="url(#rc22)"><path d="M9.71,-13.35 L-1.13,-12.85 C-6.96,-12.85 -7.80,-19.69 -15.30,-19.69 A20.83,19.69 0 0 0 -14.05,19.69 C-6.55,19.69 -6.37,12.85 -0.54,12.85 L10.29,13.35" transform="translate(1613.0,714.7) scale(1.2,1)" fill="none" stroke="#ad963c" stroke-width="12.3" stroke-linejoin="round"/></g>
<g clip-path="url(#rc23)"><path d="M9.71,-13.04 L-1.12,-12.54 C-6.95,-12.54 -7.43,-19.20 -14.93,-19.20 A20.31,19.20 0 0 0 -13.68,19.20 C-6.18,19.20 -6.38,12.54 -0.55,12.54 L10.29,13.04" transform="translate(1617.2,867.5) scale(1.2,1)" fill="none" stroke="#ad963c" stroke-width="12.0" stroke-linejoin="round"/></g>
<path d="M875.0,498.1 L980.7,494.3 M1009.7,493.2 L1226.5,485.3 M1255.5,484.2 L1470.2,476.4 M1499.2,475.3 L1717.5,467.4 M1746.5,466.3 L1848.3,462.5" fill="none" stroke="#8a3f17" stroke-width="9.6"/>
<path d="M894.0,657.2 L997.5,653.9 M1026.5,653.0 L1236.2,646.2 M1265.2,645.3 L1474.2,638.6 M1503.2,637.7 L1717.5,630.8 M1746.5,629.8 L1848.6,626.5" fill="none" stroke="#8a3f17" stroke-width="9.6"/>
<path d="M912.0,811.7 L1013.5,808.4 M1042.5,807.5 L1248.5,800.7 M1277.5,799.8 L1483.0,793.0 M1512.0,792.1 L1718.5,785.3 M1747.5,784.4 L1848.8,781.0" fill="none" stroke="#8a3f17" stroke-width="9.6"/>
<path d="M1104.6,331.0 L1110.0,395.5 M1112.3,422.5 L1123.7,558.2 M1125.9,584.6 L1137.0,717.1 M1139.2,742.9 L1150.1,872.5 M1152.2,897.5 L1156.5,948.0" fill="none" stroke="#8a3f17" stroke-width="13.1"/>
<path d="M1353.1,321.3 L1356.6,386.1 M1358.1,413.1 L1365.6,549.8 M1367.0,576.2 L1374.4,710.1 M1375.8,735.9 L1382.8,865.0 M1384.2,890.0 L1387.0,940.0" fill="none" stroke="#8a3f17" stroke-width="13.1"/>
<path d="M1602.0,311.8 L1603.8,377.5 M1604.6,404.5 L1608.3,540.8 M1609.0,567.2 L1612.7,701.8 M1613.4,727.6 L1616.9,855.0 M1617.6,880.0 L1619.0,932.0" fill="none" stroke="#8a3f17" stroke-width="13.1"/>
<g clip-path="url(#rc0)"><path d="M982.2,484.3 L981.2,495.3 C979.7,500.3 970.2,497.9 970.2,506.9 A25.0,19.5 0 0 0 1020.2,506.1 C1020.2,497.1 1010.7,499.2 1009.2,494.2 L1008.2,483.2" fill="none" stroke="#8a3f17" stroke-width="10.6" stroke-linejoin="round"/></g>
<g clip-path="url(#rc1)"><path d="M1228.0,475.3 L1227.0,486.3 C1225.5,491.3 1216.0,489.0 1216.0,498.0 A25.0,19.5 0 0 0 1266.0,497.2 C1266.0,488.2 1256.5,490.2 1255.0,485.2 L1254.0,474.2" fill="none" stroke="#8a3f17" stroke-width="10.6" stroke-linejoin="round"/></g>
<g clip-path="url(#rc2)"><path d="M1471.7,466.4 L1470.7,477.4 C1469.2,482.4 1459.7,480.1 1459.7,489.1 A25.0,19.5 0 0 0 1509.7,488.3 C1509.7,479.3 1500.2,481.3 1498.7,476.3 L1497.7,465.3" fill="none" stroke="#8a3f17" stroke-width="10.6" stroke-linejoin="round"/></g>
<g clip-path="url(#rc3)"><path d="M1719.0,457.4 L1718.0,468.4 C1716.5,473.4 1707.0,471.0 1707.0,480.0 A25.0,19.5 0 0 0 1757.0,479.2 C1757.0,470.2 1747.5,472.3 1746.0,467.3 L1745.0,456.3" fill="none" stroke="#8a3f17" stroke-width="10.6" stroke-linejoin="round"/></g>
<g clip-path="url(#rc4)"><path d="M999.0,643.9 L998.0,654.9 C996.5,659.9 987.0,657.6 987.0,666.6 A25.0,19.5 0 0 0 1037.0,665.8 C1037.0,656.8 1027.5,659.0 1026.0,654.0 L1025.0,643.0" fill="none" stroke="#8a3f17" stroke-width="10.6" stroke-linejoin="round"/></g>
<g clip-path="url(#rc5)"><path d="M1237.7,636.2 L1236.7,647.2 C1235.2,652.2 1225.7,650.0 1225.7,659.0 A25.0,19.5 0 0 0 1275.7,658.2 C1275.7,649.2 1266.2,651.3 1264.7,646.3 L1263.7,635.3" fill="none" stroke="#8a3f17" stroke-width="10.6" stroke-linejoin="round"/></g>
<g clip-path="url(#rc6)"><path d="M1475.7,628.6 L1474.7,639.6 C1473.2,644.6 1463.7,642.3 1463.7,651.3 A25.0,19.5 0 0 0 1513.7,650.5 C1513.7,641.5 1504.2,643.7 1502.7,638.7 L1501.7,627.7" fill="none" stroke="#8a3f17" stroke-width="10.6" stroke-linejoin="round"/></g>
<g clip-path="url(#rc7)"><path d="M1719.0,620.8 L1718.0,631.8 C1716.5,636.8 1707.0,634.5 1707.0,643.5 A25.0,19.5 0 0 0 1757.0,642.7 C1757.0,633.7 1747.5,635.8 1746.0,630.8 L1745.0,619.8" fill="none" stroke="#8a3f17" stroke-width="10.6" stroke-linejoin="round"/></g>
<g clip-path="url(#rc8)"><path d="M1015.0,798.4 L1014.0,809.4 C1012.5,814.4 1003.0,812.1 1003.0,821.1 A25.0,19.5 0 0 0 1053.0,820.3 C1053.0,811.3 1043.5,813.5 1042.0,808.5 L1041.0,797.5" fill="none" stroke="#8a3f17" stroke-width="10.6" stroke-linejoin="round"/></g>
<g clip-path="url(#rc9)"><path d="M1250.0,790.7 L1249.0,801.7 C1247.5,806.7 1238.0,804.4 1238.0,813.4 A25.0,19.5 0 0 0 1288.0,812.6 C1288.0,803.6 1278.5,805.8 1277.0,800.8 L1276.0,789.8" fill="none" stroke="#8a3f17" stroke-width="10.6" stroke-linejoin="round"/></g>
<g clip-path="url(#rc10)"><path d="M1484.5,783.0 L1483.5,794.0 C1482.0,799.0 1472.5,796.8 1472.5,805.8 A25.0,19.5 0 0 0 1522.5,805.0 C1522.5,796.0 1513.0,798.1 1511.5,793.1 L1510.5,782.1" fill="none" stroke="#8a3f17" stroke-width="10.6" stroke-linejoin="round"/></g>
<g clip-path="url(#rc11)"><path d="M1720.0,775.3 L1719.0,786.3 C1717.5,791.3 1708.0,789.1 1708.0,798.1 A25.0,19.5 0 0 0 1758.0,797.3 C1758.0,788.3 1748.5,790.4 1747.0,785.4 L1746.0,774.4" fill="none" stroke="#8a3f17" stroke-width="10.6" stroke-linejoin="round"/></g>
<g clip-path="url(#rc12)"><path d="M9.06,-13.98 L-1.78,-13.48 C-7.61,-13.48 -8.55,-20.65 -16.05,-20.65 A21.85,20.65 0 0 0 -14.80,20.65 C-7.30,20.65 -5.72,13.48 0.11,13.48 L10.94,13.98" transform="translate(1111.1,409.0) scale(1.2,1)" fill="none" stroke="#8a3f17" stroke-width="10.1" stroke-linejoin="round"/></g>
<g clip-path="url(#rc13)"><path d="M9.08,-13.67 L-1.76,-13.17 C-7.59,-13.17 -8.18,-20.17 -15.68,-20.17 A21.34,20.17 0 0 0 -14.43,20.17 C-6.93,20.17 -5.74,13.17 0.09,13.17 L10.92,13.67" transform="translate(1124.8,571.4) scale(1.2,1)" fill="none" stroke="#8a3f17" stroke-width="9.9" stroke-linejoin="round"/></g>
<g clip-path="url(#rc14)"><path d="M9.10,-13.35 L-1.73,-12.85 C-7.57,-12.85 -7.80,-19.69 -15.30,-19.69 A20.83,19.69 0 0 0 -14.05,19.69 C-6.55,19.69 -5.77,12.85 0.07,12.85 L10.90,13.35" transform="translate(1138.1,730.0) scale(1.2,1)" fill="none" stroke="#8a3f17" stroke-width="9.6" stroke-linejoin="round"/></g>
<g clip-path="url(#rc15)"><path d="M9.12,-13.04 L-1.71,-12.54 C-7.54,-12.54 -7.43,-19.20 -14.93,-19.20 A20.31,19.20 0 0 0 -13.68,19.20 C-6.18,19.20 -5.79,12.54 0.04,12.54 L10.88,13.04" transform="translate(1151.1,885.0) scale(1.2,1)" fill="none" stroke="#8a3f17" stroke-width="9.4" stroke-linejoin="round"/></g>
<g clip-path="url(#rc16)"><path d="M9.38,-13.98 L-1.45,-13.48 C-7.28,-13.48 -8.55,-20.65 -16.05,-20.65 A21.85,20.65 0 0 0 -14.80,20.65 C-7.30,20.65 -6.05,13.48 -0.22,13.48 L10.62,13.98" transform="translate(1357.3,399.6) scale(1.2,1)" fill="none" stroke="#8a3f17" stroke-width="10.1" stroke-linejoin="round"/></g>
<g clip-path="url(#rc17)"><path d="M9.40,-13.67 L-1.43,-13.17 C-7.27,-13.17 -8.18,-20.17 -15.68,-20.17 A21.34,20.17 0 0 0 -14.43,20.17 C-6.93,20.17 -6.07,13.17 -0.23,13.17 L10.60,13.67" transform="translate(1366.3,563.0) scale(1.2,1)" fill="none" stroke="#8a3f17" stroke-width="9.9" stroke-linejoin="round"/></g>
<g clip-path="url(#rc18)"><path d="M9.41,-13.35 L-1.42,-12.85 C-7.25,-12.85 -7.80,-19.69 -15.30,-19.69 A20.83,19.69 0 0 0 -14.05,19.69 C-6.55,19.69 -6.08,12.85 -0.25,12.85 L10.59,13.35" transform="translate(1375.1,723.0) scale(1.2,1)" fill="none" stroke="#8a3f17" stroke-width="9.6" stroke-linejoin="round"/></g>
<g clip-path="url(#rc19)"><path d="M9.43,-13.04 L-1.41,-12.54 C-7.24,-12.54 -7.43,-19.20 -14.93,-19.20 A20.31,19.20 0 0 0 -13.68,19.20 C-6.18,19.20 -6.09,12.54 -0.26,12.54 L10.57,13.04" transform="translate(1383.5,877.5) scale(1.2,1)" fill="none" stroke="#8a3f17" stroke-width="9.4" stroke-linejoin="round"/></g>
<g clip-path="url(#rc20)"><path d="M9.69,-13.98 L-1.14,-13.48 C-6.97,-13.48 -8.55,-20.65 -16.05,-20.65 A21.85,20.65 0 0 0 -14.80,20.65 C-7.30,20.65 -6.36,13.48 -0.53,13.48 L10.31,13.98" transform="translate(1604.2,391.0) scale(1.2,1)" fill="none" stroke="#8a3f17" stroke-width="10.1" stroke-linejoin="round"/></g>
<g clip-path="url(#rc21)"><path d="M9.70,-13.67 L-1.13,-13.17 C-6.97,-13.17 -8.18,-20.17 -15.68,-20.17 A21.34,20.17 0 0 0 -14.43,20.17 C-6.93,20.17 -6.37,13.17 -0.53,13.17 L10.30,13.67" transform="translate(1608.6,554.0) scale(1.2,1)" fill="none" stroke="#8a3f17" stroke-width="9.9" stroke-linejoin="round"/></g>
<g clip-path="url(#rc22)"><path d="M9.71,-13.35 L-1.13,-12.85 C-6.96,-12.85 -7.80,-19.69 -15.30,-19.69 A20.83,19.69 0 0 0 -14.05,19.69 C-6.55,19.69 -6.37,12.85 -0.54,12.85 L10.29,13.35" transform="translate(1613.0,714.7) scale(1.2,1)" fill="none" stroke="#8a3f17" stroke-width="9.6" stroke-linejoin="round"/></g>
<g clip-path="url(#rc23)"><path d="M9.71,-13.04 L-1.12,-12.54 C-6.95,-12.54 -7.43,-19.20 -14.93,-19.20 A20.31,19.20 0 0 0 -13.68,19.20 C-6.18,19.20 -6.38,12.54 -0.55,12.54 L10.29,13.04" transform="translate(1617.2,867.5) scale(1.2,1)" fill="none" stroke="#8a3f17" stroke-width="9.4" stroke-linejoin="round"/></g>
<path d="M875.0,498.1 L980.7,494.3 M1009.7,493.2 L1226.5,485.3 M1255.5,484.2 L1470.2,476.4 M1499.2,475.3 L1717.5,467.4 M1746.5,466.3 L1848.3,462.5" fill="none" stroke="#a04c1e" stroke-width="7.2"/>
<path d="M894.0,657.2 L997.5,653.9 M1026.5,653.0 L1236.2,646.2 M1265.2,645.3 L1474.2,638.6 M1503.2,637.7 L1717.5,630.8 M1746.5,629.8 L1848.6,626.5" fill="none" stroke="#a04c1e" stroke-width="7.2"/>
<path d="M912.0,811.7 L1013.5,808.4 M1042.5,807.5 L1248.5,800.7 M1277.5,799.8 L1483.0,793.0 M1512.0,792.1 L1718.5,785.3 M1747.5,784.4 L1848.8,781.0" fill="none" stroke="#a04c1e" stroke-width="7.2"/>
<path d="M1104.6,331.0 L1110.0,395.5 M1112.3,422.5 L1123.7,558.2 M1125.9,584.6 L1137.0,717.1 M1139.2,742.9 L1150.1,872.5 M1152.2,897.5 L1156.5,948.0" fill="none" stroke="#a04c1e" stroke-width="10.1"/>
<path d="M1353.1,321.3 L1356.6,386.1 M1358.1,413.1 L1365.6,549.8 M1367.0,576.2 L1374.4,710.1 M1375.8,735.9 L1382.8,865.0 M1384.2,890.0 L1387.0,940.0" fill="none" stroke="#a04c1e" stroke-width="10.1"/>
<path d="M1602.0,311.8 L1603.8,377.5 M1604.6,404.5 L1608.3,540.8 M1609.0,567.2 L1612.7,701.8 M1613.4,727.6 L1616.9,855.0 M1617.6,880.0 L1619.0,932.0" fill="none" stroke="#a04c1e" stroke-width="10.1"/>
<g clip-path="url(#rc0)"><path d="M982.2,484.3 L981.2,495.3 C979.7,500.3 970.2,497.9 970.2,506.9 A25.0,19.5 0 0 0 1020.2,506.1 C1020.2,497.1 1010.7,499.2 1009.2,494.2 L1008.2,483.2" fill="none" stroke="#a04c1e" stroke-width="8.2" stroke-linejoin="round"/></g>
<g clip-path="url(#rc1)"><path d="M1228.0,475.3 L1227.0,486.3 C1225.5,491.3 1216.0,489.0 1216.0,498.0 A25.0,19.5 0 0 0 1266.0,497.2 C1266.0,488.2 1256.5,490.2 1255.0,485.2 L1254.0,474.2" fill="none" stroke="#a04c1e" stroke-width="8.2" stroke-linejoin="round"/></g>
<g clip-path="url(#rc2)"><path d="M1471.7,466.4 L1470.7,477.4 C1469.2,482.4 1459.7,480.1 1459.7,489.1 A25.0,19.5 0 0 0 1509.7,488.3 C1509.7,479.3 1500.2,481.3 1498.7,476.3 L1497.7,465.3" fill="none" stroke="#a04c1e" stroke-width="8.2" stroke-linejoin="round"/></g>
<g clip-path="url(#rc3)"><path d="M1719.0,457.4 L1718.0,468.4 C1716.5,473.4 1707.0,471.0 1707.0,480.0 A25.0,19.5 0 0 0 1757.0,479.2 C1757.0,470.2 1747.5,472.3 1746.0,467.3 L1745.0,456.3" fill="none" stroke="#a04c1e" stroke-width="8.2" stroke-linejoin="round"/></g>
<g clip-path="url(#rc4)"><path d="M999.0,643.9 L998.0,654.9 C996.5,659.9 987.0,657.6 987.0,666.6 A25.0,19.5 0 0 0 1037.0,665.8 C1037.0,656.8 1027.5,659.0 1026.0,654.0 L1025.0,643.0" fill="none" stroke="#a04c1e" stroke-width="8.2" stroke-linejoin="round"/></g>
<g clip-path="url(#rc5)"><path d="M1237.7,636.2 L1236.7,647.2 C1235.2,652.2 1225.7,650.0 1225.7,659.0 A25.0,19.5 0 0 0 1275.7,658.2 C1275.7,649.2 1266.2,651.3 1264.7,646.3 L1263.7,635.3" fill="none" stroke="#a04c1e" stroke-width="8.2" stroke-linejoin="round"/></g>
<g clip-path="url(#rc6)"><path d="M1475.7,628.6 L1474.7,639.6 C1473.2,644.6 1463.7,642.3 1463.7,651.3 A25.0,19.5 0 0 0 1513.7,650.5 C1513.7,641.5 1504.2,643.7 1502.7,638.7 L1501.7,627.7" fill="none" stroke="#a04c1e" stroke-width="8.2" stroke-linejoin="round"/></g>
<g clip-path="url(#rc7)"><path d="M1719.0,620.8 L1718.0,631.8 C1716.5,636.8 1707.0,634.5 1707.0,643.5 A25.0,19.5 0 0 0 1757.0,642.7 C1757.0,633.7 1747.5,635.8 1746.0,630.8 L1745.0,619.8" fill="none" stroke="#a04c1e" stroke-width="8.2" stroke-linejoin="round"/></g>
<g clip-path="url(#rc8)"><path d="M1015.0,798.4 L1014.0,809.4 C1012.5,814.4 1003.0,812.1 1003.0,821.1 A25.0,19.5 0 0 0 1053.0,820.3 C1053.0,811.3 1043.5,813.5 1042.0,808.5 L1041.0,797.5" fill="none" stroke="#a04c1e" stroke-width="8.2" stroke-linejoin="round"/></g>
<g clip-path="url(#rc9)"><path d="M1250.0,790.7 L1249.0,801.7 C1247.5,806.7 1238.0,804.4 1238.0,813.4 A25.0,19.5 0 0 0 1288.0,812.6 C1288.0,803.6 1278.5,805.8 1277.0,800.8 L1276.0,789.8" fill="none" stroke="#a04c1e" stroke-width="8.2" stroke-linejoin="round"/></g>
<g clip-path="url(#rc10)"><path d="M1484.5,783.0 L1483.5,794.0 C1482.0,799.0 1472.5,796.8 1472.5,805.8 A25.0,19.5 0 0 0 1522.5,805.0 C1522.5,796.0 1513.0,798.1 1511.5,793.1 L1510.5,782.1" fill="none" stroke="#a04c1e" stroke-width="8.2" stroke-linejoin="round"/></g>
<g clip-path="url(#rc11)"><path d="M1720.0,775.3 L1719.0,786.3 C1717.5,791.3 1708.0,789.1 1708.0,798.1 A25.0,19.5 0 0 0 1758.0,797.3 C1758.0,788.3 1748.5,790.4 1747.0,785.4 L1746.0,774.4" fill="none" stroke="#a04c1e" stroke-width="8.2" stroke-linejoin="round"/></g>
<g clip-path="url(#rc12)"><path d="M9.06,-13.98 L-1.78,-13.48 C-7.61,-13.48 -8.55,-20.65 -16.05,-20.65 A21.85,20.65 0 0 0 -14.80,20.65 C-7.30,20.65 -5.72,13.48 0.11,13.48 L10.94,13.98" transform="translate(1111.1,409.0) scale(1.2,1)" fill="none" stroke="#a04c1e" stroke-width="7.8" stroke-linejoin="round"/></g>
<g clip-path="url(#rc13)"><path d="M9.08,-13.67 L-1.76,-13.17 C-7.59,-13.17 -8.18,-20.17 -15.68,-20.17 A21.34,20.17 0 0 0 -14.43,20.17 C-6.93,20.17 -5.74,13.17 0.09,13.17 L10.92,13.67" transform="translate(1124.8,571.4) scale(1.2,1)" fill="none" stroke="#a04c1e" stroke-width="7.6" stroke-linejoin="round"/></g>
<g clip-path="url(#rc14)"><path d="M9.10,-13.35 L-1.73,-12.85 C-7.57,-12.85 -7.80,-19.69 -15.30,-19.69 A20.83,19.69 0 0 0 -14.05,19.69 C-6.55,19.69 -5.77,12.85 0.07,12.85 L10.90,13.35" transform="translate(1138.1,730.0) scale(1.2,1)" fill="none" stroke="#a04c1e" stroke-width="7.4" stroke-linejoin="round"/></g>
<g clip-path="url(#rc15)"><path d="M9.12,-13.04 L-1.71,-12.54 C-7.54,-12.54 -7.43,-19.20 -14.93,-19.20 A20.31,19.20 0 0 0 -13.68,19.20 C-6.18,19.20 -5.79,12.54 0.04,12.54 L10.88,13.04" transform="translate(1151.1,885.0) scale(1.2,1)" fill="none" stroke="#a04c1e" stroke-width="7.3" stroke-linejoin="round"/></g>
<g clip-path="url(#rc16)"><path d="M9.38,-13.98 L-1.45,-13.48 C-7.28,-13.48 -8.55,-20.65 -16.05,-20.65 A21.85,20.65 0 0 0 -14.80,20.65 C-7.30,20.65 -6.05,13.48 -0.22,13.48 L10.62,13.98" transform="translate(1357.3,399.6) scale(1.2,1)" fill="none" stroke="#a04c1e" stroke-width="7.8" stroke-linejoin="round"/></g>
<g clip-path="url(#rc17)"><path d="M9.40,-13.67 L-1.43,-13.17 C-7.27,-13.17 -8.18,-20.17 -15.68,-20.17 A21.34,20.17 0 0 0 -14.43,20.17 C-6.93,20.17 -6.07,13.17 -0.23,13.17 L10.60,13.67" transform="translate(1366.3,563.0) scale(1.2,1)" fill="none" stroke="#a04c1e" stroke-width="7.6" stroke-linejoin="round"/></g>
<g clip-path="url(#rc18)"><path d="M9.41,-13.35 L-1.42,-12.85 C-7.25,-12.85 -7.80,-19.69 -15.30,-19.69 A20.83,19.69 0 0 0 -14.05,19.69 C-6.55,19.69 -6.08,12.85 -0.25,12.85 L10.59,13.35" transform="translate(1375.1,723.0) scale(1.2,1)" fill="none" stroke="#a04c1e" stroke-width="7.4" stroke-linejoin="round"/></g>
<g clip-path="url(#rc19)"><path d="M9.43,-13.04 L-1.41,-12.54 C-7.24,-12.54 -7.43,-19.20 -14.93,-19.20 A20.31,19.20 0 0 0 -13.68,19.20 C-6.18,19.20 -6.09,12.54 -0.26,12.54 L10.57,13.04" transform="translate(1383.5,877.5) scale(1.2,1)" fill="none" stroke="#a04c1e" stroke-width="7.3" stroke-linejoin="round"/></g>
<g clip-path="url(#rc20)"><path d="M9.69,-13.98 L-1.14,-13.48 C-6.97,-13.48 -8.55,-20.65 -16.05,-20.65 A21.85,20.65 0 0 0 -14.80,20.65 C-7.30,20.65 -6.36,13.48 -0.53,13.48 L10.31,13.98" transform="translate(1604.2,391.0) scale(1.2,1)" fill="none" stroke="#a04c1e" stroke-width="7.8" stroke-linejoin="round"/></g>
<g clip-path="url(#rc21)"><path d="M9.70,-13.67 L-1.13,-13.17 C-6.97,-13.17 -8.18,-20.17 -15.68,-20.17 A21.34,20.17 0 0 0 -14.43,20.17 C-6.93,20.17 -6.37,13.17 -0.53,13.17 L10.30,13.67" transform="translate(1608.6,554.0) scale(1.2,1)" fill="none" stroke="#a04c1e" stroke-width="7.6" stroke-linejoin="round"/></g>
<g clip-path="url(#rc22)"><path d="M9.71,-13.35 L-1.13,-12.85 C-6.96,-12.85 -7.80,-19.69 -15.30,-19.69 A20.83,19.69 0 0 0 -14.05,19.69 C-6.55,19.69 -6.37,12.85 -0.54,12.85 L10.29,13.35" transform="translate(1613.0,714.7) scale(1.2,1)" fill="none" stroke="#a04c1e" stroke-width="7.4" stroke-linejoin="round"/></g>
<g clip-path="url(#rc23)"><path d="M9.71,-13.04 L-1.12,-12.54 C-6.95,-12.54 -7.43,-19.20 -14.93,-19.20 A20.31,19.20 0 0 0 -13.68,19.20 C-6.18,19.20 -6.38,12.54 -0.55,12.54 L10.29,13.04" transform="translate(1617.2,867.5) scale(1.2,1)" fill="none" stroke="#a04c1e" stroke-width="7.3" stroke-linejoin="round"/></g>
<path d="M875.0,498.1 L980.7,494.3 M1009.7,493.2 L1226.5,485.3 M1255.5,484.2 L1470.2,476.4 M1499.2,475.3 L1717.5,467.4 M1746.5,466.3 L1848.3,462.5" fill="none" stroke="#c5622a" stroke-width="4.0"/>
<path d="M894.0,657.2 L997.5,653.9 M1026.5,653.0 L1236.2,646.2 M1265.2,645.3 L1474.2,638.6 M1503.2,637.7 L1717.5,630.8 M1746.5,629.8 L1848.6,626.5" fill="none" stroke="#c5622a" stroke-width="4.0"/>
<path d="M912.0,811.7 L1013.5,808.4 M1042.5,807.5 L1248.5,800.7 M1277.5,799.8 L1483.0,793.0 M1512.0,792.1 L1718.5,785.3 M1747.5,784.4 L1848.8,781.0" fill="none" stroke="#c5622a" stroke-width="4.0"/>
<path d="M1104.6,331.0 L1110.0,395.5 M1112.3,422.5 L1123.7,558.2 M1125.9,584.6 L1137.0,717.1 M1139.2,742.9 L1150.1,872.5 M1152.2,897.5 L1156.5,948.0" fill="none" stroke="#c5622a" stroke-width="6.1"/>
<path d="M1353.1,321.3 L1356.6,386.1 M1358.1,413.1 L1365.6,549.8 M1367.0,576.2 L1374.4,710.1 M1375.8,735.9 L1382.8,865.0 M1384.2,890.0 L1387.0,940.0" fill="none" stroke="#c5622a" stroke-width="6.1"/>
<path d="M1602.0,311.8 L1603.8,377.5 M1604.6,404.5 L1608.3,540.8 M1609.0,567.2 L1612.7,701.8 M1613.4,727.6 L1616.9,855.0 M1617.6,880.0 L1619.0,932.0" fill="none" stroke="#c5622a" stroke-width="6.1"/>
<g clip-path="url(#rc0)"><path d="M982.2,484.3 L981.2,495.3 C979.7,500.3 970.2,497.9 970.2,506.9 A25.0,19.5 0 0 0 1020.2,506.1 C1020.2,497.1 1010.7,499.2 1009.2,494.2 L1008.2,483.2" fill="none" stroke="#c5622a" stroke-width="5.0" stroke-linejoin="round"/></g>
<g clip-path="url(#rc1)"><path d="M1228.0,475.3 L1227.0,486.3 C1225.5,491.3 1216.0,489.0 1216.0,498.0 A25.0,19.5 0 0 0 1266.0,497.2 C1266.0,488.2 1256.5,490.2 1255.0,485.2 L1254.0,474.2" fill="none" stroke="#c5622a" stroke-width="5.0" stroke-linejoin="round"/></g>
<g clip-path="url(#rc2)"><path d="M1471.7,466.4 L1470.7,477.4 C1469.2,482.4 1459.7,480.1 1459.7,489.1 A25.0,19.5 0 0 0 1509.7,488.3 C1509.7,479.3 1500.2,481.3 1498.7,476.3 L1497.7,465.3" fill="none" stroke="#c5622a" stroke-width="5.0" stroke-linejoin="round"/></g>
<g clip-path="url(#rc3)"><path d="M1719.0,457.4 L1718.0,468.4 C1716.5,473.4 1707.0,471.0 1707.0,480.0 A25.0,19.5 0 0 0 1757.0,479.2 C1757.0,470.2 1747.5,472.3 1746.0,467.3 L1745.0,456.3" fill="none" stroke="#c5622a" stroke-width="5.0" stroke-linejoin="round"/></g>
<g clip-path="url(#rc4)"><path d="M999.0,643.9 L998.0,654.9 C996.5,659.9 987.0,657.6 987.0,666.6 A25.0,19.5 0 0 0 1037.0,665.8 C1037.0,656.8 1027.5,659.0 1026.0,654.0 L1025.0,643.0" fill="none" stroke="#c5622a" stroke-width="5.0" stroke-linejoin="round"/></g>
<g clip-path="url(#rc5)"><path d="M1237.7,636.2 L1236.7,647.2 C1235.2,652.2 1225.7,650.0 1225.7,659.0 A25.0,19.5 0 0 0 1275.7,658.2 C1275.7,649.2 1266.2,651.3 1264.7,646.3 L1263.7,635.3" fill="none" stroke="#c5622a" stroke-width="5.0" stroke-linejoin="round"/></g>
<g clip-path="url(#rc6)"><path d="M1475.7,628.6 L1474.7,639.6 C1473.2,644.6 1463.7,642.3 1463.7,651.3 A25.0,19.5 0 0 0 1513.7,650.5 C1513.7,641.5 1504.2,643.7 1502.7,638.7 L1501.7,627.7" fill="none" stroke="#c5622a" stroke-width="5.0" stroke-linejoin="round"/></g>
<g clip-path="url(#rc7)"><path d="M1719.0,620.8 L1718.0,631.8 C1716.5,636.8 1707.0,634.5 1707.0,643.5 A25.0,19.5 0 0 0 1757.0,642.7 C1757.0,633.7 1747.5,635.8 1746.0,630.8 L1745.0,619.8" fill="none" stroke="#c5622a" stroke-width="5.0" stroke-linejoin="round"/></g>
<g clip-path="url(#rc8)"><path d="M1015.0,798.4 L1014.0,809.4 C1012.5,814.4 1003.0,812.1 1003.0,821.1 A25.0,19.5 0 0 0 1053.0,820.3 C1053.0,811.3 1043.5,813.5 1042.0,808.5 L1041.0,797.5" fill="none" stroke="#c5622a" stroke-width="5.0" stroke-linejoin="round"/></g>
<g clip-path="url(#rc9)"><path d="M1250.0,790.7 L1249.0,801.7 C1247.5,806.7 1238.0,804.4 1238.0,813.4 A25.0,19.5 0 0 0 1288.0,812.6 C1288.0,803.6 1278.5,805.8 1277.0,800.8 L1276.0,789.8" fill="none" stroke="#c5622a" stroke-width="5.0" stroke-linejoin="round"/></g>
<g clip-path="url(#rc10)"><path d="M1484.5,783.0 L1483.5,794.0 C1482.0,799.0 1472.5,796.8 1472.5,805.8 A25.0,19.5 0 0 0 1522.5,805.0 C1522.5,796.0 1513.0,798.1 1511.5,793.1 L1510.5,782.1" fill="none" stroke="#c5622a" stroke-width="5.0" stroke-linejoin="round"/></g>
<g clip-path="url(#rc11)"><path d="M1720.0,775.3 L1719.0,786.3 C1717.5,791.3 1708.0,789.1 1708.0,798.1 A25.0,19.5 0 0 0 1758.0,797.3 C1758.0,788.3 1748.5,790.4 1747.0,785.4 L1746.0,774.4" fill="none" stroke="#c5622a" stroke-width="5.0" stroke-linejoin="round"/></g>
<g clip-path="url(#rc12)"><path d="M9.06,-13.98 L-1.78,-13.48 C-7.61,-13.48 -8.55,-20.65 -16.05,-20.65 A21.85,20.65 0 0 0 -14.80,20.65 C-7.30,20.65 -5.72,13.48 0.11,13.48 L10.94,13.98" transform="translate(1111.1,409.0) scale(1.2,1)" fill="none" stroke="#c5622a" stroke-width="4.8" stroke-linejoin="round"/></g>
<g clip-path="url(#rc13)"><path d="M9.08,-13.67 L-1.76,-13.17 C-7.59,-13.17 -8.18,-20.17 -15.68,-20.17 A21.34,20.17 0 0 0 -14.43,20.17 C-6.93,20.17 -5.74,13.17 0.09,13.17 L10.92,13.67" transform="translate(1124.8,571.4) scale(1.2,1)" fill="none" stroke="#c5622a" stroke-width="4.6" stroke-linejoin="round"/></g>
<g clip-path="url(#rc14)"><path d="M9.10,-13.35 L-1.73,-12.85 C-7.57,-12.85 -7.80,-19.69 -15.30,-19.69 A20.83,19.69 0 0 0 -14.05,19.69 C-6.55,19.69 -5.77,12.85 0.07,12.85 L10.90,13.35" transform="translate(1138.1,730.0) scale(1.2,1)" fill="none" stroke="#c5622a" stroke-width="4.5" stroke-linejoin="round"/></g>
<g clip-path="url(#rc15)"><path d="M9.12,-13.04 L-1.71,-12.54 C-7.54,-12.54 -7.43,-19.20 -14.93,-19.20 A20.31,19.20 0 0 0 -13.68,19.20 C-6.18,19.20 -5.79,12.54 0.04,12.54 L10.88,13.04" transform="translate(1151.1,885.0) scale(1.2,1)" fill="none" stroke="#c5622a" stroke-width="4.4" stroke-linejoin="round"/></g>
<g clip-path="url(#rc16)"><path d="M9.38,-13.98 L-1.45,-13.48 C-7.28,-13.48 -8.55,-20.65 -16.05,-20.65 A21.85,20.65 0 0 0 -14.80,20.65 C-7.30,20.65 -6.05,13.48 -0.22,13.48 L10.62,13.98" transform="translate(1357.3,399.6) scale(1.2,1)" fill="none" stroke="#c5622a" stroke-width="4.8" stroke-linejoin="round"/></g>
<g clip-path="url(#rc17)"><path d="M9.40,-13.67 L-1.43,-13.17 C-7.27,-13.17 -8.18,-20.17 -15.68,-20.17 A21.34,20.17 0 0 0 -14.43,20.17 C-6.93,20.17 -6.07,13.17 -0.23,13.17 L10.60,13.67" transform="translate(1366.3,563.0) scale(1.2,1)" fill="none" stroke="#c5622a" stroke-width="4.6" stroke-linejoin="round"/></g>
<g clip-path="url(#rc18)"><path d="M9.41,-13.35 L-1.42,-12.85 C-7.25,-12.85 -7.80,-19.69 -15.30,-19.69 A20.83,19.69 0 0 0 -14.05,19.69 C-6.55,19.69 -6.08,12.85 -0.25,12.85 L10.59,13.35" transform="translate(1375.1,723.0) scale(1.2,1)" fill="none" stroke="#c5622a" stroke-width="4.5" stroke-linejoin="round"/></g>
<g clip-path="url(#rc19)"><path d="M9.43,-13.04 L-1.41,-12.54 C-7.24,-12.54 -7.43,-19.20 -14.93,-19.20 A20.31,19.20 0 0 0 -13.68,19.20 C-6.18,19.20 -6.09,12.54 -0.26,12.54 L10.57,13.04" transform="translate(1383.5,877.5) scale(1.2,1)" fill="none" stroke="#c5622a" stroke-width="4.4" stroke-linejoin="round"/></g>
<g clip-path="url(#rc20)"><path d="M9.69,-13.98 L-1.14,-13.48 C-6.97,-13.48 -8.55,-20.65 -16.05,-20.65 A21.85,20.65 0 0 0 -14.80,20.65 C-7.30,20.65 -6.36,13.48 -0.53,13.48 L10.31,13.98" transform="translate(1604.2,391.0) scale(1.2,1)" fill="none" stroke="#c5622a" stroke-width="4.8" stroke-linejoin="round"/></g>
<g clip-path="url(#rc21)"><path d="M9.70,-13.67 L-1.13,-13.17 C-6.97,-13.17 -8.18,-20.17 -15.68,-20.17 A21.34,20.17 0 0 0 -14.43,20.17 C-6.93,20.17 -6.37,13.17 -0.53,13.17 L10.30,13.67" transform="translate(1608.6,554.0) scale(1.2,1)" fill="none" stroke="#c5622a" stroke-width="4.6" stroke-linejoin="round"/></g>
<g clip-path="url(#rc22)"><path d="M9.71,-13.35 L-1.13,-12.85 C-6.96,-12.85 -7.80,-19.69 -15.30,-19.69 A20.83,19.69 0 0 0 -14.05,19.69 C-6.55,19.69 -6.37,12.85 -0.54,12.85 L10.29,13.35" transform="translate(1613.0,714.7) scale(1.2,1)" fill="none" stroke="#c5622a" stroke-width="4.5" stroke-linejoin="round"/></g>
<g clip-path="url(#rc23)"><path d="M9.71,-13.04 L-1.12,-12.54 C-6.95,-12.54 -7.43,-19.20 -14.93,-19.20 A20.31,19.20 0 0 0 -13.68,19.20 C-6.18,19.20 -6.38,12.54 -0.55,12.54 L10.29,13.04" transform="translate(1617.2,867.5) scale(1.2,1)" fill="none" stroke="#c5622a" stroke-width="4.4" stroke-linejoin="round"/></g>
<path d="M1104.6,331.0 L1110.0,395.5 M1112.3,422.5 L1123.7,558.2 M1125.9,584.6 L1137.0,717.1 M1139.2,742.9 L1150.1,872.5 M1152.2,897.5 L1156.5,948.0" fill="none" stroke="#7e3a17" stroke-width="1.3" opacity="0.5"/>
<path d="M1353.1,321.3 L1356.6,386.1 M1358.1,413.1 L1365.6,549.8 M1367.0,576.2 L1374.4,710.1 M1375.8,735.9 L1382.8,865.0 M1384.2,890.0 L1387.0,940.0" fill="none" stroke="#7e3a17" stroke-width="1.3" opacity="0.5"/>
<path d="M1602.0,311.8 L1603.8,377.5 M1604.6,404.5 L1608.3,540.8 M1609.0,567.2 L1612.7,701.8 M1613.4,727.6 L1616.9,855.0 M1617.6,880.0 L1619.0,932.0" fill="none" stroke="#7e3a17" stroke-width="1.3" opacity="0.5"/>
<line x1="1602.4" y1="312" x2="1604.0" y2="376" stroke="#f3ddd0" stroke-width="1.1" opacity="0.8"/>
<line x1="1604.9" y1="405" x2="1606.2" y2="462" stroke="#f3ddd0" stroke-width="1.1" opacity="0.7"/>
<line x1="1606.6" y1="470" x2="1608.4" y2="539" stroke="#f3ddd0" stroke-width="1.1" opacity="0.75"/>
<line x1="1609.2" y1="568" x2="1610.6" y2="625" stroke="#f3ddd0" stroke-width="1.1" opacity="0.6"/>
<line x1="1611" y1="634" x2="1612.6" y2="700" stroke="#f3ddd0" stroke-width="1.1" opacity="0.4"/>
<rect x="727" y="100" width="228" height="246.5" rx="4" fill="rgba(212,212,212,0.42)"/>
<rect x="741.8" y="114.7" width="194.7" height="194.7" rx="4" fill="rgba(170,170,170,0.25)" stroke="#2b8bea" stroke-width="4"/>
<rect x="745.2" y="118.1" width="187.9" height="187.9" rx="2" fill="none" stroke="rgba(235,235,235,0.5)" stroke-width="2.4"/>
<g stroke-linejoin="round"><polygon points="766,211.5 844.8,268.5 844.8,273 766,216" fill="#b2b2b2"/><polygon points="844.8,268.5 909,219.5 909,224 844.8,273" fill="#cdcdcd"/><polygon points="766.0,211.3 767.7,209.8 769.5,208.3 771.2,206.7 772.9,205.2 774.7,203.6 776.4,202.0 778.2,200.4 779.9,198.9 781.6,197.3 783.4,195.8 785.1,194.3 786.8,192.8 788.6,191.4 790.3,189.9 792.0,188.5 793.8,187.0 795.5,185.5 797.2,184.0 799.0,182.5 800.7,180.9 802.5,179.4 804.2,177.8 805.9,176.3 807.7,174.7 809.4,173.1 811.1,171.6 812.9,170.0 814.6,168.4 816.3,166.9 818.1,165.3 819.8,163.8 821.5,162.2 823.3,160.7 825.0,159.1 826.8,157.6 828.5,156.1 830.2,154.5 832.0,153.0 833.7,151.5 833.7,151.5 835.6,153.4 837.6,155.3 839.5,157.0 841.4,158.4 843.4,159.4 845.3,159.7 847.2,160.6 849.1,162.2 851.1,165.0 853.0,167.7 854.9,170.2 856.9,172.2 858.8,173.6 860.7,174.7 862.7,175.7 864.6,176.2 866.5,177.3 868.5,178.7 870.4,180.4 872.3,182.7 874.2,185.1 876.2,187.5 878.1,189.8 880.0,192.2 882.0,194.3 883.9,196.3 885.8,198.3 887.8,200.2 889.7,202.1 891.6,204.0 893.6,205.9 895.5,207.8 897.4,209.6 899.3,211.4 901.3,213.2 903.2,214.9 905.1,216.6 907.1,218.3 909.0,219.9 909.0,219.9 907.4,221.2 905.7,222.4 904.1,223.7 902.4,224.8 900.8,226.0 899.1,227.1 897.5,228.3 895.8,229.5 894.2,230.8 892.5,232.0 890.9,233.3 889.2,234.5 887.6,235.7 886.0,236.9 884.3,238.1 882.7,239.2 881.0,240.4 879.4,241.6 877.7,242.7 876.1,243.9 874.4,245.1 872.8,246.2 871.1,247.4 869.5,248.5 867.8,249.7 866.2,250.9 864.6,252.1 862.9,253.3 861.3,254.5 859.6,255.7 858.0,256.9 856.3,258.2 854.7,259.5 853.0,261.1 851.4,262.7 849.7,264.3 848.1,265.9 846.4,267.5 844.8,268.9 844.8,268.9 842.8,267.5 840.8,266.1 838.7,264.7 836.7,263.3 834.7,262.0 832.7,260.5 830.7,259.0 828.6,257.5 826.6,255.8 824.6,254.1 822.6,252.5 820.6,250.8 818.5,249.0 816.5,247.4 814.5,245.8 812.5,244.1 810.5,242.6 808.4,241.1 806.4,239.7 804.4,238.3 802.4,236.9 800.3,235.6 798.3,234.1 796.3,232.7 794.3,231.2 792.3,229.9 790.2,228.8 788.2,227.6 786.2,226.5 784.2,225.3 782.2,224.0 780.1,222.6 778.1,221.2 776.1,219.6 774.1,218.0 772.1,216.4 770.0,214.8 768.0,213.0 766.0,211.3" fill="#dcdcdc"/><path d="M855.4,259.9 L852.9,260.9 L850.4,261.3 L848.5,261.2 L845.9,260.5 L843.2,258.6 L842.1,256.8 L841.8,254.9 L842.1,252.9 L842.8,251.2 L843.4,249.5 L843.9,247.6 L843.9,246.0 L843.2,243.8 L842.2,241.9 L840.6,240.4 L838.3,239.9 L835.9,240.0 L834.0,240.2 L831.3,240.3 L828.9,240.2 L826.2,239.9 L824.1,239.5 L821.6,238.8 L818.6,237.6 L816.6,236.5 L814.1,234.4 L812.5,232.9 L810.0,230.8 L807.3,230.3 L805.4,230.5 L802.9,230.8 L800.3,230.6 L797.7,230.1 L795.5,229.1 L793.0,227.0 L791.7,225.4 L790.7,223.4 L789.9,221.3 L789.7,219.8 L789.8,217.5 L790.3,215.5 L790.9,213.5 L789.5,211.8 L786.5,210.1 L784.1,207.9 L783.2,205.8 L783.2,204.0 L783.7,201.9 L784.8,200.1 L786.8,198.0 L789.3,196.2 L791.2,195.2 L793.3,194.3 L795.8,193.7 L798.6,193.4 L800.7,193.5 L803.6,193.8 L805.4,193.6 L808.1,192.2 L810.3,190.2 L812.5,188.1 L814.6,186.1 L816.8,184.0 L819.0,182.0 L821.2,180.0 L823.5,178.0 L824.9,176.6 L827.2,174.6 L829.4,172.6 L831.7,170.7 L833.9,168.7 L836.2,166.8 L838.6,164.8 L840.1,163.6 L842.5,161.7" fill="none" stroke="#a6a6a6" stroke-width="1.1"/><path d="M855.4,258.9 L852.9,259.9 L850.4,260.3 L848.5,260.2 L845.9,259.5 L843.2,257.6 L842.1,255.8 L841.8,253.9 L842.1,251.9 L842.8,250.2 L843.4,248.5 L843.9,246.6 L843.9,245.0 L843.2,242.8 L842.2,240.9 L840.6,239.4 L838.3,238.9 L835.9,239.0 L834.0,239.2 L831.3,239.3 L828.9,239.2 L826.2,238.9 L824.1,238.5 L821.6,237.8 L818.6,236.6 L816.6,235.5 L814.1,233.4 L812.5,231.9 L810.0,229.8 L807.3,229.3 L805.4,229.5 L802.9,229.8 L800.3,229.6 L797.7,229.1 L795.5,228.1 L793.0,226.0 L791.7,224.4 L790.7,222.4 L789.9,220.3 L789.7,218.8 L789.8,216.5 L790.3,214.5 L790.9,212.5 L789.5,210.8 L786.5,209.1 L784.1,206.9 L783.2,204.8 L783.2,203.0 L783.7,200.9 L784.8,199.1 L786.8,197.0 L789.3,195.2 L791.2,194.2 L793.3,193.3 L795.8,192.7 L798.6,192.4 L800.7,192.5 L803.6,192.8 L805.4,192.6 L808.1,191.2 L810.3,189.2 L812.5,187.1 L814.6,185.1 L816.8,183.0 L819.0,181.0 L821.2,179.0 L823.5,177.0 L824.9,175.6 L827.2,173.6 L829.4,171.6 L831.7,169.7 L833.9,167.7 L836.2,165.8 L838.6,163.8 L840.1,162.6 L842.5,160.7" fill="none" stroke="#fafafa" stroke-width="0.8"/><path d="M852.8,168.3 L852.1,170.3 L851.4,172.3 L851.0,174.6 L852.4,176.7 L854.9,176.8 L857.5,176.5 L860.0,176.2" fill="none" stroke="#a6a6a6" stroke-width="1.1"/><path d="M852.8,167.3 L852.1,169.3 L851.4,171.3 L851.0,173.6 L852.4,175.7 L854.9,175.8 L857.5,175.5 L860.0,175.2" fill="none" stroke="#fafafa" stroke-width="0.8"/><path d="M832.2,217.0 L832.4,215.5 L832.1,212.9 L831.8,211.5 L831.2,209.4 L828.7,207.3 L826.5,207.7 L824.2,209.0 L821.9,210.9 L820.1,213.0 L819.5,214.9 L821.0,216.5 L823.4,217.3 L826.0,218.0 L828.6,218.5 L830.4,218.6 L832.2,217.0Z" fill="rgb(216,216,216)" stroke="none"/><path d="M832.2,218.0 L832.4,216.5 L832.1,213.9 L831.8,212.5 L831.2,210.4 L828.7,208.3 L826.5,208.7 L824.2,210.0 L821.9,211.9 L820.1,214.0 L819.5,215.9 L821.0,217.5 L823.4,218.3 L826.0,219.0 L828.6,219.5 L830.4,219.6 L832.2,218.0" fill="none" stroke="#a6a6a6" stroke-width="1.1"/><path d="M832.2,217.0 L832.4,215.5 L832.1,212.9 L831.8,211.5 L831.2,209.4 L828.7,207.3 L826.5,207.7 L824.2,209.0 L821.9,210.9 L820.1,213.0 L819.5,214.9 L821.0,216.5 L823.4,217.3 L826.0,218.0 L828.6,218.5 L830.4,218.6 L832.2,217.0" fill="none" stroke="#fafafa" stroke-width="0.8"/><path d="M878.9,191.9 L878.4,193.9 L877.9,196.0 L877.8,197.9 L878.1,199.9 L878.5,201.6 L879.5,203.8 L881.4,206.5 L884.2,208.6 L887.2,210.4 L889.1,211.8 L891.6,214.1 L892.8,216.0 L893.7,218.1 L893.9,219.9 L893.4,221.9 L892.4,223.4 L890.4,224.9 L888.1,225.6 L885.8,226.0 L883.3,226.2 L881.0,226.6 L879.2,227.5 L877.9,229.0 L876.8,231.2 L876.1,233.1 L875.5,234.9 L875.0,236.8 L874.3,238.6 L873.6,240.3 L872.8,241.9 L871.9,243.5 L870.4,245.7 L869.4,247.1 L867.6,249.0 L866.3,250.3 L864.4,252.1 L862.4,253.9 L860.5,255.7 L859.2,257.0" fill="none" stroke="#a6a6a6" stroke-width="1.1"/><path d="M878.9,190.9 L878.4,192.9 L877.9,195.0 L877.8,196.9 L878.1,198.9 L878.5,200.6 L879.5,202.8 L881.4,205.5 L884.2,207.6 L887.2,209.4 L889.1,210.8 L891.6,213.1 L892.8,215.0 L893.7,217.1 L893.9,218.9 L893.4,220.9 L892.4,222.4 L890.4,223.9 L888.1,224.6 L885.8,225.0 L883.3,225.2 L881.0,225.6 L879.2,226.5 L877.9,228.0 L876.8,230.2 L876.1,232.1 L875.5,233.9 L875.0,235.8 L874.3,237.6 L873.6,239.3 L872.8,240.9 L871.9,242.5 L870.4,244.7 L869.4,246.1 L867.6,248.0 L866.3,249.3 L864.4,251.1 L862.4,252.9 L860.5,254.7 L859.2,256.0" fill="none" stroke="#fafafa" stroke-width="0.8"/><path d="M799.1,201.4 L796.8,203.3 L794.9,204.3 L792.5,204.9 L789.9,204.7 L787.5,202.5 L787.5,201.1 L788.5,198.8 L790.3,197.1 L792.2,196.0 L794.6,195.4 L797.1,195.6 L799.7,197.7 L800.0,199.6 L799.1,201.4Z" fill="rgb(219,219,219)" stroke="none"/><path d="M799.1,202.4 L796.8,204.3 L794.9,205.3 L792.5,205.9 L789.9,205.7 L787.5,203.5 L787.5,202.1 L788.5,199.8 L790.3,198.1 L792.2,197.0 L794.6,196.4 L797.1,196.6 L799.7,198.7 L800.0,200.6 L799.1,202.4" fill="none" stroke="#a6a6a6" stroke-width="1.1"/><path d="M799.1,201.4 L796.8,203.3 L794.9,204.3 L792.5,204.9 L789.9,204.7 L787.5,202.5 L787.5,201.1 L788.5,198.8 L790.3,197.1 L792.2,196.0 L794.6,195.4 L797.1,195.6 L799.7,197.7 L800.0,199.6 L799.1,201.4" fill="none" stroke="#fafafa" stroke-width="0.8"/><path d="M874.7,186.7 L874.3,188.9 L873.7,190.9 L873.1,192.8 L872.6,194.9 L872.5,196.4 L873.1,198.9 L874.0,201.0 L875.1,203.0 L876.3,204.9 L877.6,206.7 L880.1,208.9 L882.4,210.0 L884.7,211.0 L886.8,212.2 L889.3,214.4 L890.3,216.5 L890.4,217.8 L889.0,220.2 L886.0,221.2 L884.1,221.3 L881.8,221.2 L879.2,221.3 L877.3,222.1 L875.8,223.6 L874.5,225.7 L873.7,227.4 L873.0,229.1 L872.4,230.9 L871.7,232.7 L871.1,234.5 L870.4,236.2 L869.5,238.2 L868.4,240.3 L867.5,241.9 L866.3,243.4 L864.7,245.3 L862.7,247.1 L860.5,248.8 L858.4,250.5 L857.2,251.8 L855.5,253.8 L853.5,255.6 L850.7,256.8 L848.8,256.8 L846.6,255.9 L845.4,254.1 L845.4,252.8 L846.2,250.9 L847.4,248.8 L848.0,247.0 L848.0,245.4 L847.6,243.3 L847.2,241.9 L846.5,239.8 L845.8,237.6 L845.4,235.9 L845.0,234.1 L844.5,231.8 L844.0,230.2 L843.3,228.5 L842.1,226.3 L840.5,223.9 L839.3,222.1 L838.3,220.1 L837.4,218.0 L836.8,216.2 L836.3,214.6 L835.8,212.3 L835.5,210.4 L835.2,208.5 L834.7,206.1 L833.7,204.1 L830.7,202.8 L828.4,203.4 L826.5,204.3 L824.0,206.0 L821.7,207.8 L819.4,209.7 L817.3,211.6 L815.2,213.7 L813.9,215.0 L811.9,217.1 L810.1,219.3 L809.0,220.9 L807.3,223.2 L805.0,225.0 L802.6,225.9 L800.2,226.1 L797.8,225.7 L794.9,224.0 L793.5,222.4 L792.6,220.4 L792.5,218.0 L793.2,216.2 L795.5,214.3 L797.5,213.4 L800.2,211.8 L801.5,210.0 L802.2,207.9 L802.6,206.1 L803.0,204.2 L803.7,202.2 L805.2,199.7 L806.4,198.2 L808.2,195.9 L809.5,194.3 L811.3,192.0 L812.9,190.1 L814.4,188.3 L816.4,186.0 L818.4,183.9 L819.7,182.5 L821.8,180.3 L824.0,178.3 L826.1,176.2 L828.3,174.2 L830.6,172.2 L832.8,170.3 L835.2,168.4 L837.6,166.5 L840.0,164.7 L841.9,163.5 L844.5,162.1 L846.5,161.3" fill="none" stroke="#a6a6a6" stroke-width="1.1"/><path d="M874.7,185.7 L874.3,187.9 L873.7,189.9 L873.1,191.8 L872.6,193.9 L872.5,195.4 L873.1,197.9 L874.0,200.0 L875.1,202.0 L876.3,203.9 L877.6,205.7 L880.1,207.9 L882.4,209.0 L884.7,210.0 L886.8,211.2 L889.3,213.4 L890.3,215.5 L890.4,216.8 L889.0,219.2 L886.0,220.2 L884.1,220.3 L881.8,220.2 L879.2,220.3 L877.3,221.1 L875.8,222.6 L874.5,224.7 L873.7,226.4 L873.0,228.1 L872.4,229.9 L871.7,231.7 L871.1,233.5 L870.4,235.2 L869.5,237.2 L868.4,239.3 L867.5,240.9 L866.3,242.4 L864.7,244.3 L862.7,246.1 L860.5,247.8 L858.4,249.5 L857.2,250.8 L855.5,252.8 L853.5,254.6 L850.7,255.8 L848.8,255.8 L846.6,254.9 L845.4,253.1 L845.4,251.8 L846.2,249.9 L847.4,247.8 L848.0,246.0 L848.0,244.4 L847.6,242.3 L847.2,240.9 L846.5,238.8 L845.8,236.6 L845.4,234.9 L845.0,233.1 L844.5,230.8 L844.0,229.2 L843.3,227.5 L842.1,225.3 L840.5,222.9 L839.3,221.1 L838.3,219.1 L837.4,217.0 L836.8,215.2 L836.3,213.6 L835.8,211.3 L835.5,209.4 L835.2,207.5 L834.7,205.1 L833.7,203.1 L830.7,201.8 L828.4,202.4 L826.5,203.3 L824.0,205.0 L821.7,206.8 L819.4,208.7 L817.3,210.6 L815.2,212.7 L813.9,214.0 L811.9,216.1 L810.1,218.3 L809.0,219.9 L807.3,222.2 L805.0,224.0 L802.6,224.9 L800.2,225.1 L797.8,224.7 L794.9,223.0 L793.5,221.4 L792.6,219.4 L792.5,217.0 L793.2,215.2 L795.5,213.3 L797.5,212.4 L800.2,210.8 L801.5,209.0 L802.2,206.9 L802.6,205.1 L803.0,203.2 L803.7,201.2 L805.2,198.7 L806.4,197.2 L808.2,194.9 L809.5,193.3 L811.3,191.0 L812.9,189.1 L814.4,187.3 L816.4,185.0 L818.4,182.9 L819.7,181.5 L821.8,179.3 L824.0,177.3 L826.1,175.2 L828.3,173.2 L830.6,171.2 L832.8,169.3 L835.2,167.4 L837.6,165.5 L840.0,163.7 L841.9,162.5 L844.5,161.1 L846.5,160.3" fill="none" stroke="#fafafa" stroke-width="0.8"/><path d="M850.3,164.6 L849.9,166.9 L849.3,169.0 L848.7,171.0 L848.1,173.0 L847.8,174.8 L847.9,176.9 L849.3,178.2 L852.3,178.2 L854.5,177.9 L856.7,177.6 L858.7,177.3 L861.3,177.2 L864.0,177.2" fill="none" stroke="#a6a6a6" stroke-width="1.1"/><path d="M850.3,163.6 L849.9,165.9 L849.3,168.0 L848.7,170.0 L848.1,172.0 L847.8,173.8 L847.9,175.9 L849.3,177.2 L852.3,177.2 L854.5,176.9 L856.7,176.6 L858.7,176.3 L861.3,176.2 L864.0,176.2" fill="none" stroke="#fafafa" stroke-width="0.8"/><path d="M836.5,230.3 L835.1,232.7 L832.3,234.1 L829.7,234.4 L828.0,234.3 L825.4,233.7 L823.1,232.9 L820.1,231.2 L817.7,229.0 L816.4,227.3 L815.5,225.3 L815.1,223.3 L815.6,221.3 L817.9,219.5 L820.5,219.1 L822.8,219.2 L825.5,219.8 L827.9,220.6 L830.1,221.6 L833.0,223.4 L835.3,225.7 L836.3,227.7 L836.6,229.2Z" fill="rgb(219,219,219)" stroke="none"/><path d="M836.5,231.3 L835.1,233.7 L832.3,235.1 L829.7,235.4 L828.0,235.3 L825.4,234.7 L823.1,233.9 L820.1,232.2 L817.7,230.0 L816.4,228.3 L815.5,226.3 L815.1,224.3 L815.6,222.3 L817.9,220.5 L820.5,220.1 L822.8,220.2 L825.5,220.8 L827.9,221.6 L830.1,222.6 L833.0,224.4 L835.3,226.7 L836.3,228.7 L836.6,230.2" fill="none" stroke="#a6a6a6" stroke-width="1.1"/><path d="M836.5,230.3 L835.1,232.7 L832.3,234.1 L829.7,234.4 L828.0,234.3 L825.4,233.7 L823.1,232.9 L820.1,231.2 L817.7,229.0 L816.4,227.3 L815.5,225.3 L815.1,223.3 L815.6,221.3 L817.9,219.5 L820.5,219.1 L822.8,219.2 L825.5,219.8 L827.9,220.6 L830.1,221.6 L833.0,223.4 L835.3,225.7 L836.3,227.7 L836.6,229.2" fill="none" stroke="#fafafa" stroke-width="0.8"/><path d="M865.4,237.8 L863.7,239.9 L861.7,241.7 L859.3,243.2 L856.9,244.2 L854.9,244.4 L852.1,242.5 L850.9,240.7 L850.0,238.7 L849.2,236.6 L848.7,234.9 L848.3,233.2 L847.9,230.8 L847.6,229.4 L847.0,227.3 L846.2,225.2 L845.2,223.2 L844.0,221.4 L842.8,219.6 L841.3,217.4 L840.2,215.3 L839.4,213.5 L838.8,211.6 L838.3,209.2 L838.2,207.7 L838.0,205.2 L837.9,203.8 L837.4,201.4 L836.4,199.4 L833.6,197.4 L831.7,197.4 L829.0,198.5 L826.9,199.7 L824.5,201.5 L822.1,203.2 L819.7,205.1 L817.4,206.9 L815.9,208.1 L813.5,209.9 L810.9,211.5 L808.5,212.9 L806.7,214.3 L805.8,216.0 L805.1,217.9 L804.1,219.5 L802.5,220.7 L800.2,221.3 L797.6,220.7 L795.9,219.3 L795.1,217.2 L795.5,215.5 L797.3,214.0 L800.0,212.9 L802.1,212.0 L803.8,209.8 L804.3,207.9 L804.7,206.2 L805.2,204.4 L805.7,202.5 L806.6,200.3 L807.7,198.0 L808.7,196.3 L809.7,194.7 L811.4,192.2 L812.5,190.6 L814.3,188.3 L815.5,186.7 L817.4,184.5 L819.4,182.3 L820.7,180.8 L822.8,178.7 L824.9,176.6 L827.0,174.6 L829.2,172.5 L831.5,170.6 L833.8,168.7 L836.2,166.8 L838.7,165.1 L840.5,164.0 L843.4,162.7 L845.4,162.5 L847.1,164.6 L847.0,167.1 L846.6,168.9 L846.1,170.8 L845.7,172.7 L845.3,174.8 L845.6,177.2 L847.8,178.2 L850.4,177.9 L852.8,177.5 L855.2,177.1 L857.8,176.8 L860.1,176.7 L862.1,176.8 L864.7,177.2 L867.2,178.0 L870.0,180.2 L871.0,182.2 L871.2,184.9 L870.8,186.7 L870.1,188.8 L869.3,190.8 L868.8,192.7 L868.7,194.2 L869.4,196.6 L870.5,198.5 L871.7,200.4 L873.2,202.9 L874.6,205.3 L875.7,207.2 L877.0,209.0 L879.4,211.3 L882.0,212.1 L884.3,213.1 L882.7,214.4 L880.3,213.9 L878.1,214.4 L875.9,216.1 L874.4,218.1 L873.4,219.9 L872.5,221.6 L871.8,223.3 L871.0,225.1 L870.3,226.9 L869.6,228.8 L868.8,230.8 L868.0,232.8 L867.2,234.6 L866.3,236.2 L865.4,237.8Z" fill="rgb(222,222,222)" stroke="none"/><path d="M865.4,238.8 L863.7,240.9 L861.7,242.7 L859.3,244.2 L856.9,245.2 L854.9,245.4 L852.1,243.5 L850.9,241.7 L850.0,239.7 L849.2,237.6 L848.7,235.9 L848.3,234.2 L847.9,231.8 L847.6,230.4 L847.0,228.3 L846.2,226.2 L845.2,224.2 L844.0,222.4 L842.8,220.6 L841.3,218.4 L840.2,216.3 L839.4,214.5 L838.8,212.6 L838.3,210.2 L838.2,208.7 L838.0,206.2 L837.9,204.8 L837.4,202.4 L836.4,200.4 L833.6,198.4 L831.7,198.4 L829.0,199.5 L826.9,200.7 L824.5,202.5 L822.1,204.2 L819.7,206.1 L817.4,207.9 L815.9,209.1 L813.5,210.9 L810.9,212.5 L808.5,213.9 L806.7,215.3 L805.8,217.0 L805.1,218.9 L804.1,220.5 L802.5,221.7 L800.2,222.3 L797.6,221.7 L795.9,220.3 L795.1,218.2 L795.5,216.5 L797.3,215.0 L800.0,213.9 L802.1,213.0 L803.8,210.8 L804.3,208.9 L804.7,207.2 L805.2,205.4 L805.7,203.5 L806.6,201.3 L807.7,199.0 L808.7,197.3 L809.7,195.7 L811.4,193.2 L812.5,191.6 L814.3,189.3 L815.5,187.7 L817.4,185.5 L819.4,183.3 L820.7,181.8 L822.8,179.7 L824.9,177.6 L827.0,175.6 L829.2,173.5 L831.5,171.6 L833.8,169.7 L836.2,167.8 L838.7,166.1 L840.5,165.0 L843.4,163.7 L845.4,163.5 L847.1,165.6 L847.0,168.1 L846.6,169.9 L846.1,171.8 L845.7,173.7 L845.3,175.8 L845.6,178.2 L847.8,179.2 L850.4,178.9 L852.8,178.5 L855.2,178.1 L857.8,177.8 L860.1,177.7 L862.1,177.8 L864.7,178.2 L867.2,179.0 L870.0,181.2 L871.0,183.2 L871.2,185.9 L870.8,187.7 L870.1,189.8 L869.3,191.8 L868.8,193.7 L868.7,195.2 L869.4,197.6 L870.5,199.5 L871.7,201.4 L873.2,203.9 L874.6,206.3 L875.7,208.2 L877.0,210.0 L879.4,212.3 L882.0,213.1 L884.3,214.1 L882.7,215.4 L880.3,214.9 L878.1,215.4 L875.9,217.1 L874.4,219.1 L873.4,220.9 L872.5,222.6 L871.8,224.3 L871.0,226.1 L870.3,227.9 L869.6,229.8 L868.8,231.8 L868.0,233.8 L867.2,235.6 L866.3,237.2 L865.4,238.8" fill="none" stroke="#a6a6a6" stroke-width="1.1"/><path d="M865.4,237.8 L863.7,239.9 L861.7,241.7 L859.3,243.2 L856.9,244.2 L854.9,244.4 L852.1,242.5 L850.9,240.7 L850.0,238.7 L849.2,236.6 L848.7,234.9 L848.3,233.2 L847.9,230.8 L847.6,229.4 L847.0,227.3 L846.2,225.2 L845.2,223.2 L844.0,221.4 L842.8,219.6 L841.3,217.4 L840.2,215.3 L839.4,213.5 L838.8,211.6 L838.3,209.2 L838.2,207.7 L838.0,205.2 L837.9,203.8 L837.4,201.4 L836.4,199.4 L833.6,197.4 L831.7,197.4 L829.0,198.5 L826.9,199.7 L824.5,201.5 L822.1,203.2 L819.7,205.1 L817.4,206.9 L815.9,208.1 L813.5,209.9 L810.9,211.5 L808.5,212.9 L806.7,214.3 L805.8,216.0 L805.1,217.9 L804.1,219.5 L802.5,220.7 L800.2,221.3 L797.6,220.7 L795.9,219.3 L795.1,217.2 L795.5,215.5 L797.3,214.0 L800.0,212.9 L802.1,212.0 L803.8,209.8 L804.3,207.9 L804.7,206.2 L805.2,204.4 L805.7,202.5 L806.6,200.3 L807.7,198.0 L808.7,196.3 L809.7,194.7 L811.4,192.2 L812.5,190.6 L814.3,188.3 L815.5,186.7 L817.4,184.5 L819.4,182.3 L820.7,180.8 L822.8,178.7 L824.9,176.6 L827.0,174.6 L829.2,172.5 L831.5,170.6 L833.8,168.7 L836.2,166.8 L838.7,165.1 L840.5,164.0 L843.4,162.7 L845.4,162.5 L847.1,164.6 L847.0,167.1 L846.6,168.9 L846.1,170.8 L845.7,172.7 L845.3,174.8 L845.6,177.2 L847.8,178.2 L850.4,177.9 L852.8,177.5 L855.2,177.1 L857.8,176.8 L860.1,176.7 L862.1,176.8 L864.7,177.2 L867.2,178.0 L870.0,180.2 L871.0,182.2 L871.2,184.9 L870.8,186.7 L870.1,188.8 L869.3,190.8 L868.8,192.7 L868.7,194.2 L869.4,196.6 L870.5,198.5 L871.7,200.4 L873.2,202.9 L874.6,205.3 L875.7,207.2 L877.0,209.0 L879.4,211.3 L882.0,212.1 L884.3,213.1 L882.7,214.4 L880.3,213.9 L878.1,214.4 L875.9,216.1 L874.4,218.1 L873.4,219.9 L872.5,221.6 L871.8,223.3 L871.0,225.1 L870.3,226.9 L869.6,228.8 L868.8,230.8 L868.0,232.8 L867.2,234.6 L866.3,236.2 L865.4,237.8" fill="none" stroke="#fafafa" stroke-width="0.8"/><path d="M831.2,228.3 L828.8,229.5 L826.7,229.5 L823.7,228.4 L821.8,227.0 L820.5,225.3 L820.0,223.3 L821.0,221.6 L823.3,221.0 L825.3,221.3 L828.6,222.8 L830.9,225.1 L831.5,227.4Z" fill="rgb(222,222,222)" stroke="none"/><path d="M831.2,229.3 L828.8,230.5 L826.7,230.5 L823.7,229.4 L821.8,228.0 L820.5,226.3 L820.0,224.3 L821.0,222.6 L823.3,222.0 L825.3,222.3 L828.6,223.8 L830.9,226.1 L831.5,228.4" fill="none" stroke="#a6a6a6" stroke-width="1.1"/><path d="M831.2,228.3 L828.8,229.5 L826.7,229.5 L823.7,228.4 L821.8,227.0 L820.5,225.3 L820.0,223.3 L821.0,221.6 L823.3,221.0 L825.3,221.3 L828.6,222.8 L830.9,225.1 L831.5,227.4" fill="none" stroke="#fafafa" stroke-width="0.8"/><path d="M863.6,234.9 L861.8,236.9 L859.5,238.5 L857.3,239.1 L855.0,238.8 L852.6,236.6 L851.6,234.7 L851.0,233.0 L850.5,231.4 L850.0,229.0 L849.7,227.3 L849.2,225.5 L848.4,223.4 L847.4,221.4 L846.2,219.6 L844.9,217.6 L843.1,215.1 L842.1,213.1 L841.3,211.2 L840.8,209.6 L840.5,207.4 L840.4,205.6 L840.5,203.2 L840.5,201.7 L840.3,199.4 L839.6,197.6 L837.9,195.2 L835.1,193.3 L833.0,193.4 L830.1,194.7 L828.4,195.8 L825.9,197.5 L823.5,199.3 L821.2,201.1 L818.8,202.9 L817.1,204.0 L814.6,205.7 L812.1,207.0 L809.6,207.7 L807.5,206.7 L807.1,204.8 L807.3,202.6 L807.8,200.7 L808.5,198.7 L809.4,196.7 L810.3,194.9 L811.3,193.2 L812.9,190.8 L814.0,189.1 L815.8,186.8 L817.0,185.2 L818.8,183.0 L820.5,181.2 L822.1,179.3 L824.2,177.2 L826.3,175.1 L828.5,173.1 L830.7,171.1 L833.1,169.2 L835.5,167.4 L838.1,165.7 L840.0,164.8 L842.2,164.1 L844.7,166.2 L844.7,167.7 L844.3,169.9 L843.8,172.1 L843.4,174.3 L843.1,176.4 L843.9,178.6 L845.2,179.0 L847.1,178.8 L849.5,178.3 L851.8,177.8 L854.2,177.3 L856.8,177.0 L859.6,176.9 L861.4,177.1 L864.1,177.7 L866.3,178.9 L867.7,180.6 L868.4,183.0 L868.2,184.6 L867.6,186.6 L866.6,188.7 L865.8,190.9 L865.5,192.6 L866.1,195.0 L867.3,196.9 L868.7,198.8 L870.5,201.4 L871.6,203.3 L872.6,205.4 L873.4,207.6 L873.8,209.3 L873.7,211.6 L873.2,213.4 L872.4,215.3 L871.7,217.1 L870.9,218.8 L870.2,220.6 L869.5,222.3 L868.8,224.1 L868.1,225.8 L867.2,227.9 L866.3,229.9 L865.4,231.8 L864.6,233.4 L863.6,234.9Z" fill="rgb(226,226,226)" stroke="none"/><path d="M863.6,235.9 L861.8,237.9 L859.5,239.5 L857.3,240.1 L855.0,239.8 L852.6,237.6 L851.6,235.7 L851.0,234.0 L850.5,232.4 L850.0,230.0 L849.7,228.3 L849.2,226.5 L848.4,224.4 L847.4,222.4 L846.2,220.6 L844.9,218.6 L843.1,216.1 L842.1,214.1 L841.3,212.2 L840.8,210.6 L840.5,208.4 L840.4,206.6 L840.5,204.2 L840.5,202.7 L840.3,200.4 L839.6,198.6 L837.9,196.2 L835.1,194.3 L833.0,194.4 L830.1,195.7 L828.4,196.8 L825.9,198.5 L823.5,200.3 L821.2,202.1 L818.8,203.9 L817.1,205.0 L814.6,206.7 L812.1,208.0 L809.6,208.7 L807.5,207.7 L807.1,205.8 L807.3,203.6 L807.8,201.7 L808.5,199.7 L809.4,197.7 L810.3,195.9 L811.3,194.2 L812.9,191.8 L814.0,190.1 L815.8,187.8 L817.0,186.2 L818.8,184.0 L820.5,182.2 L822.1,180.3 L824.2,178.2 L826.3,176.1 L828.5,174.1 L830.7,172.1 L833.1,170.2 L835.5,168.4 L838.1,166.7 L840.0,165.8 L842.2,165.1 L844.7,167.2 L844.7,168.7 L844.3,170.9 L843.8,173.1 L843.4,175.3 L843.1,177.4 L843.9,179.6 L845.2,180.0 L847.1,179.8 L849.5,179.3 L851.8,178.8 L854.2,178.3 L856.8,178.0 L859.6,177.9 L861.4,178.1 L864.1,178.7 L866.3,179.9 L867.7,181.6 L868.4,184.0 L868.2,185.6 L867.6,187.6 L866.6,189.7 L865.8,191.9 L865.5,193.6 L866.1,196.0 L867.3,197.9 L868.7,199.8 L870.5,202.4 L871.6,204.3 L872.6,206.4 L873.4,208.6 L873.8,210.3 L873.7,212.6 L873.2,214.4 L872.4,216.3 L871.7,218.1 L870.9,219.8 L870.2,221.6 L869.5,223.3 L868.8,225.1 L868.1,226.8 L867.2,228.9 L866.3,230.9 L865.4,232.8 L864.6,234.4 L863.6,235.9" fill="none" stroke="#a6a6a6" stroke-width="1.1"/><path d="M863.6,234.9 L861.8,236.9 L859.5,238.5 L857.3,239.1 L855.0,238.8 L852.6,236.6 L851.6,234.7 L851.0,233.0 L850.5,231.4 L850.0,229.0 L849.7,227.3 L849.2,225.5 L848.4,223.4 L847.4,221.4 L846.2,219.6 L844.9,217.6 L843.1,215.1 L842.1,213.1 L841.3,211.2 L840.8,209.6 L840.5,207.4 L840.4,205.6 L840.5,203.2 L840.5,201.7 L840.3,199.4 L839.6,197.6 L837.9,195.2 L835.1,193.3 L833.0,193.4 L830.1,194.7 L828.4,195.8 L825.9,197.5 L823.5,199.3 L821.2,201.1 L818.8,202.9 L817.1,204.0 L814.6,205.7 L812.1,207.0 L809.6,207.7 L807.5,206.7 L807.1,204.8 L807.3,202.6 L807.8,200.7 L808.5,198.7 L809.4,196.7 L810.3,194.9 L811.3,193.2 L812.9,190.8 L814.0,189.1 L815.8,186.8 L817.0,185.2 L818.8,183.0 L820.5,181.2 L822.1,179.3 L824.2,177.2 L826.3,175.1 L828.5,173.1 L830.7,171.1 L833.1,169.2 L835.5,167.4 L838.1,165.7 L840.0,164.8 L842.2,164.1 L844.7,166.2 L844.7,167.7 L844.3,169.9 L843.8,172.1 L843.4,174.3 L843.1,176.4 L843.9,178.6 L845.2,179.0 L847.1,178.8 L849.5,178.3 L851.8,177.8 L854.2,177.3 L856.8,177.0 L859.6,176.9 L861.4,177.1 L864.1,177.7 L866.3,178.9 L867.7,180.6 L868.4,183.0 L868.2,184.6 L867.6,186.6 L866.6,188.7 L865.8,190.9 L865.5,192.6 L866.1,195.0 L867.3,196.9 L868.7,198.8 L870.5,201.4 L871.6,203.3 L872.6,205.4 L873.4,207.6 L873.8,209.3 L873.7,211.6 L873.2,213.4 L872.4,215.3 L871.7,217.1 L870.9,218.8 L870.2,220.6 L869.5,222.3 L868.8,224.1 L868.1,225.8 L867.2,227.9 L866.3,229.9 L865.4,231.8 L864.6,233.4 L863.6,234.9" fill="none" stroke="#fafafa" stroke-width="0.8"/><path d="M861.1,232.7 L859.4,233.9 L857.1,234.4 L854.1,232.6 L853.1,230.7 L852.4,228.5 L851.8,226.4 L851.4,225.0 L850.7,222.9 L849.8,220.8 L848.8,218.9 L847.6,217.1 L845.9,214.6 L844.5,212.5 L843.5,210.5 L842.9,208.6 L842.6,207.1 L842.4,204.6 L842.6,202.8 L842.8,201.2 L843.0,199.0 L842.9,196.8 L842.0,194.7 L840.7,192.9 L838.6,190.4 L837.2,189.2 L835.1,189.0 L832.4,190.2 L830.5,191.4 L828.3,193.0 L825.9,194.8 L823.5,196.6 L821.1,198.4 L818.7,200.1 L817.0,201.2 L814.2,202.7 L811.9,203.4 L809.5,202.1 L809.4,200.2 L809.8,198.1 L810.5,196.1 L811.3,194.3 L812.2,192.5 L813.7,190.0 L814.8,188.4 L816.3,186.2 L817.7,184.4 L819.5,182.1 L820.8,180.6 L822.8,178.4 L824.8,176.3 L827.0,174.3 L829.2,172.2 L831.5,170.3 L833.9,168.5 L836.4,166.8 L838.3,165.8 L840.7,165.2 L842.5,166.9 L842.5,169.5 L842.2,171.3 L841.8,173.1 L841.4,175.0 L841.1,177.3 L841.3,179.4 L844.0,180.1 L846.4,179.4 L848.6,178.7 L850.8,178.0 L853.1,177.5 L855.6,177.1 L858.0,177.0 L860.0,177.2 L862.4,177.8 L865.1,179.9 L865.7,182.2 L865.5,183.9 L864.6,186.1 L863.7,188.0 L862.8,189.8 L862.4,191.9 L862.9,193.6 L864.8,196.0 L866.6,198.0 L868.4,200.3 L869.6,202.2 L870.5,204.2 L871.2,206.5 L871.4,208.2 L871.3,210.5 L870.8,212.4 L870.3,214.3 L869.5,216.2 L868.8,218.0 L868.1,219.8 L867.4,221.5 L866.6,223.2 L865.9,225.0 L865.0,226.8 L863.8,229.1 L862.9,230.6 L861.7,232.2Z" fill="rgb(229,229,229)" stroke="none"/><path d="M861.1,233.7 L859.4,234.9 L857.1,235.4 L854.1,233.6 L853.1,231.7 L852.4,229.5 L851.8,227.4 L851.4,226.0 L850.7,223.9 L849.8,221.8 L848.8,219.9 L847.6,218.1 L845.9,215.6 L844.5,213.5 L843.5,211.5 L842.9,209.6 L842.6,208.1 L842.4,205.6 L842.6,203.8 L842.8,202.2 L843.0,200.0 L842.9,197.8 L842.0,195.7 L840.7,193.9 L838.6,191.4 L837.2,190.2 L835.1,190.0 L832.4,191.2 L830.5,192.4 L828.3,194.0 L825.9,195.8 L823.5,197.6 L821.1,199.4 L818.7,201.1 L817.0,202.2 L814.2,203.7 L811.9,204.4 L809.5,203.1 L809.4,201.2 L809.8,199.1 L810.5,197.1 L811.3,195.3 L812.2,193.5 L813.7,191.0 L814.8,189.4 L816.3,187.2 L817.7,185.4 L819.5,183.1 L820.8,181.6 L822.8,179.4 L824.8,177.3 L827.0,175.3 L829.2,173.2 L831.5,171.3 L833.9,169.5 L836.4,167.8 L838.3,166.8 L840.7,166.2 L842.5,167.9 L842.5,170.5 L842.2,172.3 L841.8,174.1 L841.4,176.0 L841.1,178.3 L841.3,180.4 L844.0,181.1 L846.4,180.4 L848.6,179.7 L850.8,179.0 L853.1,178.5 L855.6,178.1 L858.0,178.0 L860.0,178.2 L862.4,178.8 L865.1,180.9 L865.7,183.2 L865.5,184.9 L864.6,187.1 L863.7,189.0 L862.8,190.8 L862.4,192.9 L862.9,194.6 L864.8,197.0 L866.6,199.0 L868.4,201.3 L869.6,203.2 L870.5,205.2 L871.2,207.5 L871.4,209.2 L871.3,211.5 L870.8,213.4 L870.3,215.3 L869.5,217.2 L868.8,219.0 L868.1,220.8 L867.4,222.5 L866.6,224.2 L865.9,226.0 L865.0,227.8 L863.8,230.1 L862.9,231.6 L861.7,233.2" fill="none" stroke="#a6a6a6" stroke-width="1.1"/><path d="M861.1,232.7 L859.4,233.9 L857.1,234.4 L854.1,232.6 L853.1,230.7 L852.4,228.5 L851.8,226.4 L851.4,225.0 L850.7,222.9 L849.8,220.8 L848.8,218.9 L847.6,217.1 L845.9,214.6 L844.5,212.5 L843.5,210.5 L842.9,208.6 L842.6,207.1 L842.4,204.6 L842.6,202.8 L842.8,201.2 L843.0,199.0 L842.9,196.8 L842.0,194.7 L840.7,192.9 L838.6,190.4 L837.2,189.2 L835.1,189.0 L832.4,190.2 L830.5,191.4 L828.3,193.0 L825.9,194.8 L823.5,196.6 L821.1,198.4 L818.7,200.1 L817.0,201.2 L814.2,202.7 L811.9,203.4 L809.5,202.1 L809.4,200.2 L809.8,198.1 L810.5,196.1 L811.3,194.3 L812.2,192.5 L813.7,190.0 L814.8,188.4 L816.3,186.2 L817.7,184.4 L819.5,182.1 L820.8,180.6 L822.8,178.4 L824.8,176.3 L827.0,174.3 L829.2,172.2 L831.5,170.3 L833.9,168.5 L836.4,166.8 L838.3,165.8 L840.7,165.2 L842.5,166.9 L842.5,169.5 L842.2,171.3 L841.8,173.1 L841.4,175.0 L841.1,177.3 L841.3,179.4 L844.0,180.1 L846.4,179.4 L848.6,178.7 L850.8,178.0 L853.1,177.5 L855.6,177.1 L858.0,177.0 L860.0,177.2 L862.4,177.8 L865.1,179.9 L865.7,182.2 L865.5,183.9 L864.6,186.1 L863.7,188.0 L862.8,189.8 L862.4,191.9 L862.9,193.6 L864.8,196.0 L866.6,198.0 L868.4,200.3 L869.6,202.2 L870.5,204.2 L871.2,206.5 L871.4,208.2 L871.3,210.5 L870.8,212.4 L870.3,214.3 L869.5,216.2 L868.8,218.0 L868.1,219.8 L867.4,221.5 L866.6,223.2 L865.9,225.0 L865.0,226.8 L863.8,229.1 L862.9,230.6 L861.7,232.2" fill="none" stroke="#fafafa" stroke-width="0.8"/><path d="M836.6,183.5 L834.5,185.5 L832.1,187.3 L830.3,188.7 L828.3,190.4 L825.9,192.2 L823.6,194.0 L821.2,195.8 L818.6,197.5 L816.8,198.5 L814.2,199.5 L811.7,198.8 L811.5,196.7 L812.0,194.6 L812.7,192.7 L813.5,190.9 L814.5,189.2 L816.1,186.7 L817.2,185.1 L818.9,182.7 L820.2,181.2 L822.1,179.0 L824.1,176.8 L825.5,175.4 L827.6,173.3 L829.8,171.4 L832.2,169.5 L833.8,168.3 L836.6,166.8 L838.9,166.2 L840.6,167.7 L840.7,169.7 L840.4,171.5 L840.0,173.6 L839.5,175.8 L839.0,177.9 L838.4,180.0 L837.7,181.9 L836.6,183.5Z" fill="rgb(233,233,233)" stroke="none"/><path d="M836.6,184.5 L834.5,186.5 L832.1,188.3 L830.3,189.7 L828.3,191.4 L825.9,193.2 L823.6,195.0 L821.2,196.8 L818.6,198.5 L816.8,199.5 L814.2,200.5 L811.7,199.8 L811.5,197.7 L812.0,195.6 L812.7,193.7 L813.5,191.9 L814.5,190.2 L816.1,187.7 L817.2,186.1 L818.9,183.7 L820.2,182.2 L822.1,180.0 L824.1,177.8 L825.5,176.4 L827.6,174.3 L829.8,172.4 L832.2,170.5 L833.8,169.3 L836.6,167.8 L838.9,167.2 L840.6,168.7 L840.7,170.7 L840.4,172.5 L840.0,174.6 L839.5,176.8 L839.0,178.9 L838.4,181.0 L837.7,182.9 L836.6,184.5" fill="none" stroke="#a6a6a6" stroke-width="1.1"/><path d="M836.6,183.5 L834.5,185.5 L832.1,187.3 L830.3,188.7 L828.3,190.4 L825.9,192.2 L823.6,194.0 L821.2,195.8 L818.6,197.5 L816.8,198.5 L814.2,199.5 L811.7,198.8 L811.5,196.7 L812.0,194.6 L812.7,192.7 L813.5,190.9 L814.5,189.2 L816.1,186.7 L817.2,185.1 L818.9,182.7 L820.2,181.2 L822.1,179.0 L824.1,176.8 L825.5,175.4 L827.6,173.3 L829.8,171.4 L832.2,169.5 L833.8,168.3 L836.6,166.8 L838.9,166.2 L840.6,167.7 L840.7,169.7 L840.4,171.5 L840.0,173.6 L839.5,175.8 L839.0,177.9 L838.4,180.0 L837.7,181.9 L836.6,183.5" fill="none" stroke="#fafafa" stroke-width="0.8"/><path d="M862.1,226.3 L860.3,228.3 L858.2,229.3 L855.9,228.4 L854.7,226.6 L853.8,224.5 L853.1,222.6 L852.4,220.8 L851.5,218.9 L850.2,216.7 L848.8,214.6 L847.5,212.9 L846.4,211.0 L845.3,209.0 L844.6,206.8 L844.3,204.7 L844.4,202.7 L844.7,201.1 L845.2,199.2 L845.8,197.3 L846.1,195.3 L845.6,193.2 L843.5,190.6 L842.1,188.9 L841.0,186.9 L840.8,184.5 L841.7,182.8 L844.0,181.0 L845.9,180.0 L848.8,178.7 L850.9,178.0 L853.2,177.4 L855.8,177.1 L857.9,177.2 L860.6,177.8 L862.1,178.9 L863.1,181.0 L862.8,183.3 L861.9,185.1 L860.9,186.7 L859.7,188.7 L859.0,190.7 L859.8,193.0 L862.3,195.2 L864.8,197.4 L866.3,199.1 L867.9,201.4 L868.8,203.4 L869.3,205.2 L869.5,207.6 L869.4,209.4 L869.1,211.0 L868.5,212.9 L867.8,214.8 L866.9,216.9 L866.0,219.0 L865.2,220.7 L864.4,222.3 L863.5,224.0 L862.2,226.2Z" fill="rgb(233,233,233)" stroke="none"/><path d="M862.1,227.3 L860.3,229.3 L858.2,230.3 L855.9,229.4 L854.7,227.6 L853.8,225.5 L853.1,223.6 L852.4,221.8 L851.5,219.9 L850.2,217.7 L848.8,215.6 L847.5,213.9 L846.4,212.0 L845.3,210.0 L844.6,207.8 L844.3,205.7 L844.4,203.7 L844.7,202.1 L845.2,200.2 L845.8,198.3 L846.1,196.3 L845.6,194.2 L843.5,191.6 L842.1,189.9 L841.0,187.9 L840.8,185.5 L841.7,183.8 L844.0,182.0 L845.9,181.0 L848.8,179.7 L850.9,179.0 L853.2,178.4 L855.8,178.1 L857.9,178.2 L860.6,178.8 L862.1,179.9 L863.1,182.0 L862.8,184.3 L861.9,186.1 L860.9,187.7 L859.7,189.7 L859.0,191.7 L859.8,194.0 L862.3,196.2 L864.8,198.4 L866.3,200.1 L867.9,202.4 L868.8,204.4 L869.3,206.2 L869.5,208.6 L869.4,210.4 L869.1,212.0 L868.5,213.9 L867.8,215.8 L866.9,217.9 L866.0,220.0 L865.2,221.7 L864.4,223.3 L863.5,225.0 L862.2,227.2" fill="none" stroke="#a6a6a6" stroke-width="1.1"/><path d="M862.1,226.3 L860.3,228.3 L858.2,229.3 L855.9,228.4 L854.7,226.6 L853.8,224.5 L853.1,222.6 L852.4,220.8 L851.5,218.9 L850.2,216.7 L848.8,214.6 L847.5,212.9 L846.4,211.0 L845.3,209.0 L844.6,206.8 L844.3,204.7 L844.4,202.7 L844.7,201.1 L845.2,199.2 L845.8,197.3 L846.1,195.3 L845.6,193.2 L843.5,190.6 L842.1,188.9 L841.0,186.9 L840.8,184.5 L841.7,182.8 L844.0,181.0 L845.9,180.0 L848.8,178.7 L850.9,178.0 L853.2,177.4 L855.8,177.1 L857.9,177.2 L860.6,177.8 L862.1,178.9 L863.1,181.0 L862.8,183.3 L861.9,185.1 L860.9,186.7 L859.7,188.7 L859.0,190.7 L859.8,193.0 L862.3,195.2 L864.8,197.4 L866.3,199.1 L867.9,201.4 L868.8,203.4 L869.3,205.2 L869.5,207.6 L869.4,209.4 L869.1,211.0 L868.5,212.9 L867.8,214.8 L866.9,216.9 L866.0,219.0 L865.2,220.7 L864.4,222.3 L863.5,224.0 L862.2,226.2" fill="none" stroke="#fafafa" stroke-width="0.8"/><path d="M832.0,184.5 L829.8,186.5 L827.5,188.3 L825.2,190.2 L823.6,191.4 L821.2,193.1 L818.6,194.7 L816.6,195.6 L813.9,195.5 L813.5,193.2 L814.0,191.1 L814.8,189.3 L815.8,187.5 L816.8,185.8 L818.4,183.4 L819.5,181.8 L821.4,179.5 L823.2,177.5 L824.7,175.9 L826.8,173.8 L829.0,171.8 L831.3,169.9 L833.8,168.2 L835.8,167.3 L838.4,167.3 L839.0,169.8 L838.8,171.4 L838.3,173.3 L837.7,175.4 L837.0,177.4 L835.9,179.7 L834.6,181.7 L832.7,183.8Z" fill="rgb(236,236,236)" stroke="none"/><path d="M832.0,185.5 L829.8,187.5 L827.5,189.3 L825.2,191.2 L823.6,192.4 L821.2,194.1 L818.6,195.7 L816.6,196.6 L813.9,196.5 L813.5,194.2 L814.0,192.1 L814.8,190.3 L815.8,188.5 L816.8,186.8 L818.4,184.4 L819.5,182.8 L821.4,180.5 L823.2,178.5 L824.7,176.9 L826.8,174.8 L829.0,172.8 L831.3,170.9 L833.8,169.2 L835.8,168.3 L838.4,168.3 L839.0,170.8 L838.8,172.4 L838.3,174.3 L837.7,176.4 L837.0,178.4 L835.9,180.7 L834.6,182.7 L832.7,184.8" fill="none" stroke="#a6a6a6" stroke-width="1.1"/><path d="M832.0,184.5 L829.8,186.5 L827.5,188.3 L825.2,190.2 L823.6,191.4 L821.2,193.1 L818.6,194.7 L816.6,195.6 L813.9,195.5 L813.5,193.2 L814.0,191.1 L814.8,189.3 L815.8,187.5 L816.8,185.8 L818.4,183.4 L819.5,181.8 L821.4,179.5 L823.2,177.5 L824.7,175.9 L826.8,173.8 L829.0,171.8 L831.3,169.9 L833.8,168.2 L835.8,167.3 L838.4,167.3 L839.0,169.8 L838.8,171.4 L838.3,173.3 L837.7,175.4 L837.0,177.4 L835.9,179.7 L834.6,181.7 L832.7,183.8" fill="none" stroke="#fafafa" stroke-width="0.8"/><path d="M854.6,188.6 L853.0,189.7 L850.3,189.9 L847.5,188.7 L845.7,187.4 L844.3,185.6 L844.1,183.4 L845.0,181.7 L847.3,179.8 L849.1,178.8 L851.9,177.8 L854.1,177.4 L856.3,177.4 L858.6,178.0 L860.2,179.6 L860.0,182.0 L859.1,183.7 L857.4,186.0 L855.3,188.0Z" fill="rgb(236,236,236)" stroke="none"/><path d="M854.6,189.6 L853.0,190.7 L850.3,190.9 L847.5,189.7 L845.7,188.4 L844.3,186.6 L844.1,184.4 L845.0,182.7 L847.3,180.8 L849.1,179.8 L851.9,178.8 L854.1,178.4 L856.3,178.4 L858.6,179.0 L860.2,180.6 L860.0,183.0 L859.1,184.7 L857.4,187.0 L855.3,189.0" fill="none" stroke="#a6a6a6" stroke-width="1.1"/><path d="M854.6,188.6 L853.0,189.7 L850.3,189.9 L847.5,188.7 L845.7,187.4 L844.3,185.6 L844.1,183.4 L845.0,181.7 L847.3,179.8 L849.1,178.8 L851.9,177.8 L854.1,177.4 L856.3,177.4 L858.6,178.0 L860.2,179.6 L860.0,182.0 L859.1,183.7 L857.4,186.0 L855.3,188.0" fill="none" stroke="#fafafa" stroke-width="0.8"/><path d="M861.8,221.1 L859.8,223.0 L857.3,223.1 L855.3,220.6 L854.2,218.7 L853.1,216.8 L851.9,214.9 L850.6,213.1 L848.9,210.7 L847.6,208.6 L846.7,206.5 L846.3,205.0 L846.2,202.7 L846.4,201.1 L847.0,199.2 L848.2,196.8 L849.3,195.3 L851.3,193.2 L853.4,192.5 L856.1,193.1 L858.5,194.0 L861.4,195.7 L863.4,197.1 L865.0,198.7 L866.7,201.4 L867.4,203.2 L867.7,205.0 L867.8,207.1 L867.5,209.3 L866.9,211.2 L866.3,213.0 L865.5,214.8 L864.7,216.4 L863.8,218.1 L862.3,220.4Z" fill="rgb(236,236,236)" stroke="none"/><path d="M861.8,222.1 L859.8,224.0 L857.3,224.1 L855.3,221.6 L854.2,219.7 L853.1,217.8 L851.9,215.9 L850.6,214.1 L848.9,211.7 L847.6,209.6 L846.7,207.5 L846.3,206.0 L846.2,203.7 L846.4,202.1 L847.0,200.2 L848.2,197.8 L849.3,196.3 L851.3,194.2 L853.4,193.5 L856.1,194.1 L858.5,195.0 L861.4,196.7 L863.4,198.1 L865.0,199.7 L866.7,202.4 L867.4,204.2 L867.7,206.0 L867.8,208.1 L867.5,210.3 L866.9,212.2 L866.3,214.0 L865.5,215.8 L864.7,217.4 L863.8,219.1 L862.3,221.4" fill="none" stroke="#a6a6a6" stroke-width="1.1"/><path d="M861.8,221.1 L859.8,223.0 L857.3,223.1 L855.3,220.6 L854.2,218.7 L853.1,216.8 L851.9,214.9 L850.6,213.1 L848.9,210.7 L847.6,208.6 L846.7,206.5 L846.3,205.0 L846.2,202.7 L846.4,201.1 L847.0,199.2 L848.2,196.8 L849.3,195.3 L851.3,193.2 L853.4,192.5 L856.1,193.1 L858.5,194.0 L861.4,195.7 L863.4,197.1 L865.0,198.7 L866.7,201.4 L867.4,203.2 L867.7,205.0 L867.8,207.1 L867.5,209.3 L866.9,211.2 L866.3,213.0 L865.5,214.8 L864.7,216.4 L863.8,218.1 L862.3,220.4" fill="none" stroke="#fafafa" stroke-width="0.8"/><path d="M831.1,182.4 L829.1,184.4 L826.8,186.4 L824.5,188.2 L822.3,189.8 L820.3,191.0 L817.9,192.1 L815.5,191.3 L815.5,189.7 L816.2,187.7 L817.2,185.6 L818.5,183.3 L819.6,181.7 L821.4,179.3 L822.6,177.8 L824.6,175.7 L826.7,173.6 L828.9,171.6 L831.2,169.7 L833.9,168.2 L836.2,167.8 L837.2,169.8 L836.9,172.0 L836.3,174.1 L835.6,176.0 L834.6,177.9 L833.1,180.2 L831.6,181.9Z" fill="rgb(239,239,239)" stroke="none"/><path d="M831.1,183.4 L829.1,185.4 L826.8,187.4 L824.5,189.2 L822.3,190.8 L820.3,192.0 L817.9,193.1 L815.5,192.3 L815.5,190.7 L816.2,188.7 L817.2,186.6 L818.5,184.3 L819.6,182.7 L821.4,180.3 L822.6,178.8 L824.6,176.7 L826.7,174.6 L828.9,172.6 L831.2,170.7 L833.9,169.2 L836.2,168.8 L837.2,170.8 L836.9,173.0 L836.3,175.1 L835.6,177.0 L834.6,178.9 L833.1,181.2 L831.6,182.9" fill="none" stroke="#a6a6a6" stroke-width="1.1"/><path d="M831.1,182.4 L829.1,184.4 L826.8,186.4 L824.5,188.2 L822.3,189.8 L820.3,191.0 L817.9,192.1 L815.5,191.3 L815.5,189.7 L816.2,187.7 L817.2,185.6 L818.5,183.3 L819.6,181.7 L821.4,179.3 L822.6,177.8 L824.6,175.7 L826.7,173.6 L828.9,171.6 L831.2,169.7 L833.9,168.2 L836.2,167.8 L837.2,169.8 L836.9,172.0 L836.3,174.1 L835.6,176.0 L834.6,177.9 L833.1,180.2 L831.6,181.9" fill="none" stroke="#fafafa" stroke-width="0.8"/><path d="M855.9,182.0 L853.6,183.8 L851.4,184.4 L849.5,184.2 L847.8,182.6 L848.4,180.6 L850.6,178.9 L853.0,178.2 L854.9,178.3 L856.7,180.1 L855.9,182.0Z" fill="rgb(239,239,239)" stroke="none"/><path d="M855.9,183.0 L853.6,184.8 L851.4,185.4 L849.5,185.2 L847.8,183.6 L848.4,181.6 L850.6,179.9 L853.0,179.2 L854.9,179.3 L856.7,181.1 L855.9,183.0" fill="none" stroke="#a6a6a6" stroke-width="1.1"/><path d="M855.9,182.0 L853.6,183.8 L851.4,184.4 L849.5,184.2 L847.8,182.6 L848.4,180.6 L850.6,178.9 L853.0,178.2 L854.9,178.3 L856.7,180.1 L855.9,182.0" fill="none" stroke="#fafafa" stroke-width="0.8"/><path d="M862.2,215.3 L860.1,217.2 L857.7,217.2 L855.2,215.0 L853.8,213.2 L851.9,210.7 L850.6,208.9 L849.5,207.1 L848.5,205.0 L848.0,202.6 L848.1,201.1 L848.6,199.3 L850.1,196.9 L852.3,195.1 L854.5,194.5 L857.6,194.7 L860.0,195.6 L862.0,196.9 L864.1,199.0 L865.4,201.2 L865.9,202.9 L866.1,204.9 L866.0,206.6 L865.6,208.7 L864.9,210.5 L864.2,212.2 L862.7,214.6Z" fill="rgb(239,239,239)" stroke="none"/><path d="M862.2,216.3 L860.1,218.2 L857.7,218.2 L855.2,216.0 L853.8,214.2 L851.9,211.7 L850.6,209.9 L849.5,208.1 L848.5,206.0 L848.0,203.6 L848.1,202.1 L848.6,200.3 L850.1,197.9 L852.3,196.1 L854.5,195.5 L857.6,195.7 L860.0,196.6 L862.0,197.9 L864.1,200.0 L865.4,202.2 L865.9,203.9 L866.1,205.9 L866.0,207.6 L865.6,209.7 L864.9,211.5 L864.2,213.2 L862.7,215.6" fill="none" stroke="#a6a6a6" stroke-width="1.1"/><path d="M862.2,215.3 L860.1,217.2 L857.7,217.2 L855.2,215.0 L853.8,213.2 L851.9,210.7 L850.6,208.9 L849.5,207.1 L848.5,205.0 L848.0,202.6 L848.1,201.1 L848.6,199.3 L850.1,196.9 L852.3,195.1 L854.5,194.5 L857.6,194.7 L860.0,195.6 L862.0,196.9 L864.1,199.0 L865.4,201.2 L865.9,202.9 L866.1,204.9 L866.0,206.6 L865.6,208.7 L864.9,210.5 L864.2,212.2 L862.7,214.6" fill="none" stroke="#fafafa" stroke-width="0.8"/><path d="M831.0,179.6 L829.0,181.7 L826.9,183.7 L824.5,185.6 L822.0,187.3 L820.1,188.2 L817.7,188.0 L817.7,186.2 L818.3,184.3 L819.4,182.2 L820.8,180.0 L822.0,178.4 L823.9,176.2 L825.9,174.0 L828.0,172.0 L830.4,170.2 L833.2,168.7 L835.3,170.0 L835.2,171.7 L834.6,173.7 L833.6,175.9 L832.2,178.1 L831.0,179.6Z" fill="rgb(243,243,243)" stroke="none"/><path d="M831.0,180.6 L829.0,182.7 L826.9,184.7 L824.5,186.6 L822.0,188.3 L820.1,189.2 L817.7,189.0 L817.7,187.2 L818.3,185.3 L819.4,183.2 L820.8,181.0 L822.0,179.4 L823.9,177.2 L825.9,175.0 L828.0,173.0 L830.4,171.2 L833.2,169.7 L835.3,171.0 L835.2,172.7 L834.6,174.7 L833.6,176.9 L832.2,179.1 L831.0,180.6" fill="none" stroke="#a6a6a6" stroke-width="1.1"/><path d="M831.0,179.6 L829.0,181.7 L826.9,183.7 L824.5,185.6 L822.0,187.3 L820.1,188.2 L817.7,188.0 L817.7,186.2 L818.3,184.3 L819.4,182.2 L820.8,180.0 L822.0,178.4 L823.9,176.2 L825.9,174.0 L828.0,172.0 L830.4,170.2 L833.2,168.7 L835.3,170.0 L835.2,171.7 L834.6,173.7 L833.6,175.9 L832.2,178.1 L831.0,179.6" fill="none" stroke="#fafafa" stroke-width="0.8"/><path d="M863.1,208.7 L861.5,211.0 L858.9,212.4 L856.3,211.3 L853.9,209.0 L852.4,207.1 L851.0,204.7 L850.3,203.0 L850.1,200.9 L850.4,199.2 L851.9,197.0 L854.5,195.5 L856.8,195.4 L859.5,196.1 L861.4,197.3 L862.9,199.0 L864.0,201.0 L864.4,203.5 L864.3,204.9 L863.8,207.0 L863.1,208.7Z" fill="rgb(243,243,243)" stroke="none"/><path d="M863.1,209.7 L861.5,212.0 L858.9,213.4 L856.3,212.3 L853.9,210.0 L852.4,208.1 L851.0,205.7 L850.3,204.0 L850.1,201.9 L850.4,200.2 L851.9,198.0 L854.5,196.5 L856.8,196.4 L859.5,197.1 L861.4,198.3 L862.9,200.0 L864.0,202.0 L864.4,204.5 L864.3,205.9 L863.8,208.0 L863.1,209.7" fill="none" stroke="#a6a6a6" stroke-width="1.1"/><path d="M863.1,208.7 L861.5,211.0 L858.9,212.4 L856.3,211.3 L853.9,209.0 L852.4,207.1 L851.0,204.7 L850.3,203.0 L850.1,200.9 L850.4,199.2 L851.9,197.0 L854.5,195.5 L856.8,195.4 L859.5,196.1 L861.4,197.3 L862.9,199.0 L864.0,201.0 L864.4,203.5 L864.3,204.9 L863.8,207.0 L863.1,208.7" fill="none" stroke="#fafafa" stroke-width="0.8"/><path d="M830.2,177.5 L828.2,179.6 L826.0,181.6 L823.6,183.4 L821.7,184.3 L820.2,184.4 L820.3,181.9 L821.1,180.1 L822.1,178.4 L824.0,176.1 L825.9,173.9 L827.3,172.5 L828.9,171.3 L831.7,169.8 L833.1,171.1 L832.7,173.2 L831.8,175.0 L830.4,177.1Z" fill="rgb(246,246,246)" stroke="none"/><path d="M830.2,178.5 L828.2,180.6 L826.0,182.6 L823.6,184.4 L821.7,185.3 L820.2,185.4 L820.3,182.9 L821.1,181.1 L822.1,179.4 L824.0,177.1 L825.9,174.9 L827.3,173.5 L828.9,172.3 L831.7,170.8 L833.1,172.1 L832.7,174.2 L831.8,176.0 L830.4,178.1" fill="none" stroke="#a6a6a6" stroke-width="1.1"/><path d="M830.2,177.5 L828.2,179.6 L826.0,181.6 L823.6,183.4 L821.7,184.3 L820.2,184.4 L820.3,181.9 L821.1,180.1 L822.1,178.4 L824.0,176.1 L825.9,173.9 L827.3,172.5 L828.9,171.3 L831.7,169.8 L833.1,171.1 L832.7,173.2 L831.8,175.0 L830.4,177.1" fill="none" stroke="#fafafa" stroke-width="0.8"/><path d="M860.7,206.5 L858.9,207.4 L856.6,206.9 L854.6,205.0 L853.1,202.7 L852.6,201.0 L852.8,198.8 L853.9,197.3 L855.9,196.5 L858.6,196.8 L861.2,198.9 L862.1,201.0 L862.2,203.0 L861.7,204.9 L860.7,206.5Z" fill="rgb(246,246,246)" stroke="none"/><path d="M860.7,207.5 L858.9,208.4 L856.6,207.9 L854.6,206.0 L853.1,203.7 L852.6,202.0 L852.8,199.8 L853.9,198.3 L855.9,197.5 L858.6,197.8 L861.2,199.9 L862.1,202.0 L862.2,204.0 L861.7,205.9 L860.7,207.5" fill="none" stroke="#a6a6a6" stroke-width="1.1"/><path d="M860.7,206.5 L858.9,207.4 L856.6,206.9 L854.6,205.0 L853.1,202.7 L852.6,201.0 L852.8,198.8 L853.9,197.3 L855.9,196.5 L858.6,196.8 L861.2,198.9 L862.1,201.0 L862.2,203.0 L861.7,204.9 L860.7,206.5" fill="none" stroke="#fafafa" stroke-width="0.8"/><path d="M828.5,175.9 L826.4,178.0 L824.3,179.5 L823.1,179.0 L823.8,177.1 L825.6,174.8 L827.7,172.7 L830.0,171.7 L830.0,173.4 L828.5,175.9Z" fill="rgb(250,250,250)" stroke="none"/><path d="M828.5,176.9 L826.4,179.0 L824.3,180.5 L823.1,180.0 L823.8,178.1 L825.6,175.8 L827.7,173.7 L830.0,172.7 L830.0,174.4 L828.5,176.9" fill="none" stroke="#a6a6a6" stroke-width="1.1"/><path d="M828.5,175.9 L826.4,178.0 L824.3,179.5 L823.1,179.0 L823.8,177.1 L825.6,174.8 L827.7,172.7 L830.0,171.7 L830.0,173.4 L828.5,175.9" fill="none" stroke="#fafafa" stroke-width="0.8"/></g>
<text x="761.0" y="155.5" font-size="27" font-weight="400" fill="#ffffff" letter-spacing="0.00" >1</text>
<rect x="727" y="60" width="36" height="35.8" fill="#f7f7f7"/>
<path d="M740.8,71.8 L735,78.4 L740.8,85 M745.2,69.3 V87.3 M749.6,71.8 L755.4,78.4 L749.6,85" fill="none" stroke="#222" stroke-width="1.8"/>
<rect x="980" y="60" width="811.2" height="57" fill="#2e2e2e"/>
<rect x="980" y="60" width="811.2" height="2.5" fill="#3a3f40"/>
<text x="1001.6" y="96.0" font-size="23.2" font-weight="700" fill="#ffffff" letter-spacing="-0.59" >Slicing Result</text>
<path d="M1761.5,75 L1772,82 L1782.5,75 M1761.5,82.3 L1772,89.3 L1782.5,82.3" fill="none" stroke="#fff" stroke-width="1.8"/>
<polygon points="781.6,1077.4 894,1073.2 898.6,1232 786,1236.7" fill="#c5c5c5"/>
<text x="819.5" y="1114.8" font-size="14" fill="#333" textLength="40" lengthAdjust="spacingAndGlyphs">Left</text>
<g transform="translate(831.5,1160) rotate(88)"><text x="0.0" y="0.0" font-size="21.5" font-weight="400" fill="#3a3a3a" letter-spacing="-1.42" >Bottom</text></g>
<line x1="895.8" y1="1143" x2="895.8" y2="1078" stroke="#7e80c6" stroke-width="2.7"/><polygon points="895.8,1069 891.3,1079.5 900.3,1079.5" fill="#7e80c6"/>
<line x1="895" y1="1143.3" x2="787" y2="1146.8" stroke="#7fc67f" stroke-width="2.5"/><polygon points="777.5,1147.1 788.3,1142.6 788.6,1151.4" fill="#7fc67f"/>
<line x1="896" y1="1143" x2="900" y2="1226" stroke="#c97a7a" stroke-width="2.5"/><polygon points="900.5,1236 895.5,1225.5 904.8,1225" fill="#c97a7a"/>
<text x="890.0" y="1059.5" font-size="20" font-weight="400" fill="#7e80c6" letter-spacing="0.00" >z</text>
<text x="740.0" y="1155.0" font-size="22" font-weight="400" fill="#7fc67f" letter-spacing="0.00" >y</text>
<text x="897.5" y="1266.0" font-size="20" font-weight="400" fill="#c97a7a" letter-spacing="0.00" >x</text>
<circle cx="1002" cy="1213" r="30" fill="rgba(255,255,255,0.92)"/>
<path d="M994,1196.5 H988.5 Q986,1196.5 986,1199 V1204 M986,1221 V1226.5 Q986,1229 988.5,1229 H994 M1003,1229 H1008" fill="none" stroke="#4a4a4a" stroke-width="2.2"/>
<rect x="990" y="1187.5" width="668" height="42" rx="21" fill="#fff"/>
<rect x="1001.5" y="1198" width="640" height="21" rx="10.5" fill="#00ae42"/>
<circle cx="1637" cy="1208.3" r="20" fill="#fff"/><circle cx="1637" cy="1208.3" r="17.6" fill="#00ae42"/>
<path d="M1664.5,1208.5 L1673.5,1202.5 V1214.5 Z" fill="#fff"/><rect x="1673" y="1192" width="70" height="33" rx="4" fill="#fff"/>
<text x="1683.5" y="1216.2" font-size="23" font-weight="400" fill="#1fa455" letter-spacing="-0.55" >1840</text>
<rect x="1931.2" y="226" width="40.6" height="880" rx="20.3" fill="#fff"/>
<rect x="1941" y="240" width="21.6" height="850" rx="10" fill="#00ae42"/>
<circle cx="1952" cy="246" r="21" fill="#fff"/><circle cx="1952" cy="246" r="17.7" fill="#00ae42"/>
<path d="M1952,236.5 V255.5 M1942.5,246 H1961.5" stroke="#fff" stroke-width="1.8"/>
<circle cx="1951.7" cy="1084" r="21" fill="#fff"/><circle cx="1951.7" cy="1084" r="17.7" fill="#00ae42"/>
<line x1="1951.7" y1="1105" x2="1951.7" y2="1192" stroke="#d8d8d8" stroke-width="1"/>
<rect x="1839" y="185.7" width="75" height="59.7" rx="4" fill="#fff"/><path d="M1906,245.4 H1926 L1914,236 Z" fill="#fff"/>
<text x="1862.0" y="209.3" font-size="21.5" font-weight="400" fill="#1fa455" letter-spacing="-0.18" >155</text>
<text x="1848.6" y="237.3" font-size="21.5" font-weight="400" fill="#1fa455" letter-spacing="0.35" >46.50</text>
<rect x="1846" y="1085" width="67.6" height="60" rx="4" fill="#fff"/><path d="M1906,1085 H1926 L1913.6,1095 Z" fill="#fff"/>
<text x="1880.0" y="1108.2" font-size="21.5" font-weight="400" fill="#1fa455" letter-spacing="0.00" >1</text>
<text x="1862.0" y="1135.2" font-size="21.5" font-weight="400" fill="#1fa455" letter-spacing="0.05" >0.30</text>
<g fill="#00ae42"><path d="M1952.5,1194 L1971,1203 L1952.5,1212 L1934,1203 Z"/><path d="M1934,1209 L1938.5,1206.8 L1952.5,1213.6 L1966.500,1206.8 L1971,1209 L1952.5,1218 Z"/><path d="M1934,1215.5 L1938.5,1213.3 L1952.5,1220.100 L1966.500,1213.3 L1971,1215.5 L1952.5,1224.500 Z"/></g>
</svg>
<div id="topbar">
<div id="tab-preview"></div>
<svg class="ic" style="left:9px;top:10px" width="38" height="38" viewBox="0 0 38 38"><path d="M19,1.5 L1.5,18 L6,18 L6,36 L15,36 L15,24 L23,24 L23,36 L32,36 L32,18 L36.5,18 L29.5,11.5 L29.5,4.5 L25.5,4.5 L25.5,7.7 Z" fill="#fff"/></svg>
<svg class="ic" style="left:119px;top:14px" width="30" height="30" viewBox="0 0 30 30"><path d="M15,2 L27.5,8.5 L27.5,21.5 L15,28 L2.5,21.5 L2.5,8.5 Z M2.5,8.5 L15,15 L27.5,8.5 M15,15 L15,28" fill="none" stroke="#fff" stroke-width="2" stroke-linejoin="round"/></svg>
<span class="t" style="left:167.8px;top:15.3px;font-size:24.6px;letter-spacing:0.18px;color:#ffffff;font-weight:400;-webkit-text-stroke:0.45px #fff;">Prepare</span>
<svg class="ic" style="left:361px;top:14px" width="30" height="30" viewBox="0 0 30 30"><path d="M15,2 L28,9 L15,16 L2,9 Z" fill="none" stroke="#fff" stroke-width="2" stroke-linejoin="round"/><path d="M2,14.5 L15,21.5 L28,14.5 M2,20.5 L15,27.5 L28,20.5" fill="none" stroke="#fff" stroke-width="2" stroke-linejoin="round" stroke-linecap="round"/></svg>
<span class="t" style="left:410.4px;top:15.3px;font-size:24.6px;letter-spacing:0.21px;color:#ffffff;font-weight:400;-webkit-text-stroke:0.45px #fff;">Preview</span>
<svg class="ic" style="left:607px;top:13px" width="34" height="31" viewBox="0 0 34 31"><g fill="none" stroke="#fff" stroke-width="2" stroke-linejoin="round" stroke-linecap="square"><rect x="2.5" y="2.5" width="14" height="8"/><path d="M9.5,10.5 V15 M5.5,15 H13.5"/><path d="M24,3 H32 V8"/><path d="M3,21 V28.5 H11"/><rect x="19.5" y="17.5" width="12.5" height="11.5" rx="1"/><path d="M23,17.5 V22 H28.5 V17.5"/></g></svg>
<span class="t" style="left:658.2px;top:15.3px;font-size:24.6px;letter-spacing:0.32px;color:#ffffff;font-weight:400;-webkit-text-stroke:0.45px #fff;">Device</span>
<svg class="ic" style="left:850px;top:14px" width="32" height="29" viewBox="0 0 32 29"><g fill="none" stroke="#fff" stroke-width="2" stroke-linecap="round"><rect x="1.5" y="1.5" width="28.5" height="26" rx="2"/><path d="M12,8.5 H24.5 M12,14.5 H24.5 M12,20.5 H24.5"/><path d="M7.3,8.5 H8 M7.3,14.5 H8 M7.3,20.5 H8"/></g></svg>
<span class="t" style="left:898.8px;top:15.3px;font-size:24.6px;letter-spacing:0.54px;color:#ffffff;font-weight:400;-webkit-text-stroke:0.45px #fff;">Project</span>
<svg class="ic" style="left:1072.5px;top:15.2px" width="26" height="26" viewBox="0 0 26 26"><path d="M23.85,11.19 L23.85,14.81 L21.34,15.10 L20.38,17.41 L21.95,19.40 L19.40,21.95 L17.41,20.38 L15.10,21.34 L14.81,23.85 L11.19,23.85 L10.90,21.34 L8.59,20.38 L6.60,21.95 L4.05,19.40 L5.62,17.41 L4.66,15.10 L2.15,14.81 L2.15,11.19 L4.66,10.90 L5.62,8.59 L4.05,6.60 L6.60,4.05 L8.59,5.62 L10.90,4.66 L11.19,2.15 L14.81,2.15 L15.10,4.66 L17.41,5.62 L19.40,4.05 L21.95,6.60 L20.38,8.59 L21.34,10.90Z" fill="none" stroke="#fff" stroke-width="2" stroke-linejoin="round"/><path d="M13,7.5 L18,13 H15 V18 H11 V13 H8 Z" fill="#fff"/></svg>
<span class="t" style="left:1119.4px;top:15.3px;font-size:24.6px;letter-spacing:0.60px;color:#ffffff;font-weight:400;-webkit-text-stroke:0.45px #fff;">Calibration</span>
<svg class="ic" style="left:1358px;top:13px" width="28" height="28" viewBox="0 0 28 28"><rect x="2" y="3" width="9" height="22" fill="#5cb860" stroke="#fff" stroke-width="1.6"/><rect x="11" y="14" width="14" height="11" fill="#3c4447" stroke="#fff" stroke-width="1.6"/><rect x="17" y="2" width="9" height="9" fill="#a078e8"/></svg>
<div id="tsep"></div>
<div class="btnl" style="left:1445px"></div>
<svg class="ic" style="left:1462px;top:25px" width="16" height="9" viewBox="0 0 16 9"><path d="M1.5,1.5 L8,7 L14.5,1.5" fill="none" stroke="#fff" stroke-width="1.8" stroke-linecap="round" stroke-linejoin="round"/></svg>
<div class="btnr" style="left:1492px;width:186px;background:#6e6e6e"></div>
<span class="t" style="left:1519.0px;top:15.3px;font-size:24.6px;letter-spacing:0.45px;color:#b4b4b4;font-weight:400;">Slice plate</span>
<div class="btnl" style="left:1706px"></div>
<svg class="ic" style="left:1722.5px;top:25px" width="16" height="9" viewBox="0 0 16 9"><path d="M1.5,1.5 L8,7 L14.5,1.5" fill="none" stroke="#fff" stroke-width="1.8" stroke-linecap="round" stroke-linejoin="round"/></svg>
<div class="btnr" style="left:1752px;width:184px;background:#4cae50"></div>
<span class="t" style="left:1779.0px;top:15.3px;font-size:24.6px;letter-spacing:0.62px;color:#ffffff;font-weight:400;-webkit-text-stroke:0.45px #fff;">Print plate</span>
</div>
<div id="grip"><i></i></div>
</body></html>
